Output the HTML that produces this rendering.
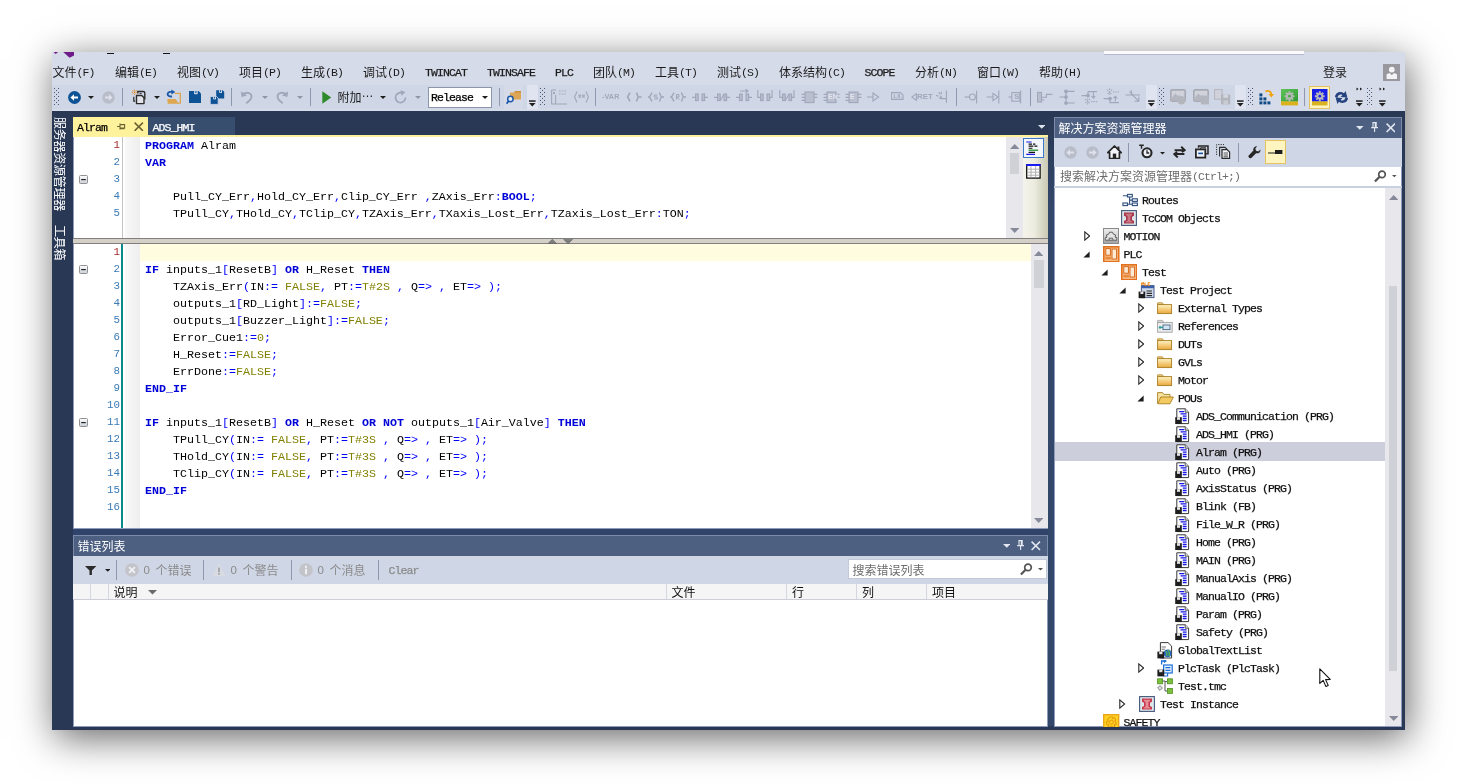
<!DOCTYPE html>
<html lang="zh-CN"><head><meta charset="utf-8"><title>TwinCAT</title>
<style>
html,body{margin:0;padding:0;background:#fff;}
body{width:1457px;height:782px;overflow:hidden;position:relative;font-family:"Liberation Mono","Noto Sans CJK SC",monospace;font-size:12px;}
#r div,#r svg{position:absolute;}
#r{position:absolute;left:0;top:0;width:1457px;height:782px;overflow:hidden;will-change:transform;}
.t{white-space:pre;font-size:12px;}
.l{-webkit-text-stroke:0.25px;letter-spacing:-0.9px;font-size:11.5px;position:relative;top:0.5px;font-family:"Liberation Mono",monospace;}
.mx .l{top:-0.2px;-webkit-text-stroke:0;}
.d{font-family:"Liberation Sans",sans-serif;letter-spacing:-0.4px;}
.c{font-family:"Liberation Sans","Noto Sans CJK SC",sans-serif;position:relative;top:1.05px;}
.e{position:relative;top:-4.6px;}
.code{white-space:pre;font-family:"Liberation Mono",monospace;font-size:11.667px;color:#000;}
.code b{color:#0000d8;font-weight:bold;}
.code i{color:#0000ff;font-style:normal;}
.code u{color:#808000;text-decoration:none;}
.ln{font-family:"Liberation Mono",monospace;font-size:10.8px;text-align:right;color:#2b91af;white-space:pre;}
</style></head><body><div id="r">
<div style="left:52px;top:52px;width:1353px;height:678px;background:#293955;box-shadow:3px 8px 36px 0 rgba(0,0,0,.60);"></div>
<div style="left:52px;top:52px;width:1353px;height:59px;background:#d6dbe9;"></div>
<div style="left:52px;top:85px;width:1194.5px;height:23.5px;background:#cfd6e5;"></div>
<svg style="left:52px;top:52px" width="23" height="7" viewBox="0 0 23 7"><path d="M1.6 0 L6.2 0 L3.6 1.9 Z M11.2 0 L22 0 L22 3.6 L17.6 5.7 Z" fill="#6f1c8a"/></svg>
<div style="left:106.8px;top:52.6px;width:7.3px;height:1.5px;background:#141414;"></div>
<div style="left:163px;top:52.6px;width:7.3px;height:1.5px;background:#141414;"></div>
<div style="left:1104px;top:51px;width:200px;height:2.6px;background:#fbfbfd;border-bottom:1px solid #b4bacb;"></div>
<div class="t mx" style="left:52.5px;top:63px;height:18px;line-height:18px;color:#1b1b1b;"><span class="c">文件</span><span class="l">(F)</span></div>
<div class="t mx" style="left:115px;top:63px;height:18px;line-height:18px;color:#1b1b1b;"><span class="c">编辑</span><span class="l">(E)</span></div>
<div class="t mx" style="left:177px;top:63px;height:18px;line-height:18px;color:#1b1b1b;"><span class="c">视图</span><span class="l">(V)</span></div>
<div class="t mx" style="left:239px;top:63px;height:18px;line-height:18px;color:#1b1b1b;"><span class="c">项目</span><span class="l">(P)</span></div>
<div class="t mx" style="left:301px;top:63px;height:18px;line-height:18px;color:#1b1b1b;"><span class="c">生成</span><span class="l">(B)</span></div>
<div class="t mx" style="left:363px;top:63px;height:18px;line-height:18px;color:#1b1b1b;"><span class="c">调试</span><span class="l">(D)</span></div>
<div class="t" style="left:425px;top:63px;height:18px;line-height:18px;color:#1b1b1b;"><span class="l">TWINCAT</span></div>
<div class="t" style="left:487px;top:63px;height:18px;line-height:18px;color:#1b1b1b;"><span class="l">TWINSAFE</span></div>
<div class="t" style="left:555px;top:63px;height:18px;line-height:18px;color:#1b1b1b;"><span class="l">PLC</span></div>
<div class="t mx" style="left:593px;top:63px;height:18px;line-height:18px;color:#1b1b1b;"><span class="c">团队</span><span class="l">(M)</span></div>
<div class="t mx" style="left:655px;top:63px;height:18px;line-height:18px;color:#1b1b1b;"><span class="c">工具</span><span class="l">(T)</span></div>
<div class="t mx" style="left:717px;top:63px;height:18px;line-height:18px;color:#1b1b1b;"><span class="c">测试</span><span class="l">(S)</span></div>
<div class="t mx" style="left:779px;top:63px;height:18px;line-height:18px;color:#1b1b1b;"><span class="c">体系结构</span><span class="l">(C)</span></div>
<div class="t" style="left:864.5px;top:63px;height:18px;line-height:18px;color:#1b1b1b;"><span class="l">SCOPE</span></div>
<div class="t mx" style="left:915px;top:63px;height:18px;line-height:18px;color:#1b1b1b;"><span class="c">分析</span><span class="l">(N)</span></div>
<div class="t mx" style="left:977px;top:63px;height:18px;line-height:18px;color:#1b1b1b;"><span class="c">窗口</span><span class="l">(W)</span></div>
<div class="t mx" style="left:1039px;top:63px;height:18px;line-height:18px;color:#1b1b1b;"><span class="c">帮助</span><span class="l">(H)</span></div>
<div class="t" style="left:1323px;top:63px;height:18px;line-height:18px;color:#1b1b1b;"><span class="c">登录</span></div>
<svg style="left:1382.5px;top:64px" width="17.5" height="17" viewBox="0 0 17.5 17"><rect width="17.5" height="17" fill="#98989e"/><circle cx="8.8" cy="5.6" r="2.9" fill="#f4f4f6"/><path d="M3.6 15 L3.6 10.2 L6.6 9 L8.8 11.2 L11 9 L14 10.2 L14 15 Z" fill="#f4f4f6"/></svg>
<svg style="left:54px;top:88px" width="5" height="17" viewBox="0 0 5 17"><rect x="0" y="0" width="1" height="1" fill="#4b5470"/><rect x="4" y="0" width="1" height="1" fill="#4b5470"/><rect x="2" y="2" width="1" height="1" fill="#4b5470"/><rect x="0" y="4" width="1" height="1" fill="#4b5470"/><rect x="4" y="4" width="1" height="1" fill="#4b5470"/><rect x="2" y="6" width="1" height="1" fill="#4b5470"/><rect x="0" y="8" width="1" height="1" fill="#4b5470"/><rect x="4" y="8" width="1" height="1" fill="#4b5470"/><rect x="2" y="10" width="1" height="1" fill="#4b5470"/><rect x="0" y="12" width="1" height="1" fill="#4b5470"/><rect x="4" y="12" width="1" height="1" fill="#4b5470"/><rect x="2" y="14" width="1" height="1" fill="#4b5470"/><rect x="0" y="16" width="1" height="1" fill="#4b5470"/><rect x="4" y="16" width="1" height="1" fill="#4b5470"/></svg>
<svg style="left:67.5px;top:90.5px" width="13" height="13" viewBox="0 0 13 13"><circle cx="6.5" cy="6.5" r="6.4" fill="#0e5296"/><path d="M10 5.6 L6 5.6 L6 3.2 L2.4 6.5 L6 9.8 L6 7.4 L10 7.4 Z" fill="#fff"/></svg>
<svg style="left:88px;top:96px" width="6" height="3.5" viewBox="0 0 6 3.5"><path d="M0 0 L6 0 L3 3 Z" fill="#1e1e1e"/></svg>
<svg style="left:102px;top:90.5px" width="13" height="13" viewBox="0 0 13 13"><circle cx="6.5" cy="6.5" r="6.2" fill="#b9bdc9"/><path d="M3 5.6 L7 5.6 L7 3.2 L10.6 6.5 L7 9.8 L7 7.4 L3 7.4 Z" fill="#dfe2ea"/></svg>
<div style="left:122px;top:88px;width:1.3px;height:18px;background:#8d97ad;"></div>
<svg style="left:131px;top:89px" width="16" height="16" viewBox="0 0 16 16"><path d="M6.8 4.6 L6.8 2.5 L12.2 2.5 Q13.8 2.5 13.8 4.1 L13.8 10.4" fill="none" stroke="#2b2b2b" stroke-width="1.4"/><path d="M8.6 4.4 L10.6 4.4" stroke="#2b2b2b" stroke-width="1"/><path d="M5.5 6.5 L10.8 6.5 L13 8.7 L13 14.6 L5.5 14.6 Z" fill="#e3e3ea" stroke="#2b2b2b" stroke-width="1.4" stroke-linejoin="round"/><path d="M2.8 7.8 L2.8 12.2 L4.2 12.2" fill="none" stroke="#2b2b2b" stroke-width="1.2"/><path d="M3.5 0.6 L3.5 6 M0.8 3.3 L6.2 3.3 M1.5 1.3 L5.5 5.3 M5.5 1.3 L1.5 5.3" stroke="#dd8a1c" stroke-width="0.95" stroke-dasharray="1.3 0.9"/></svg>
<svg style="left:154px;top:96px" width="6" height="3.5" viewBox="0 0 6 3.5"><path d="M0 0 L6 0 L3 3 Z" fill="#1e1e1e"/></svg>
<svg style="left:165.5px;top:89px" width="16" height="16" viewBox="0 0 16 16"><path d="M8.6 4.4 L14.3 4.4 L14.3 14.2 L11.4 14.2" fill="none" stroke="#dca450" stroke-width="1.3"/><path d="M1.3 10 L9.8 10 L12.6 14.7 L1.7 14.7 Z" fill="#dfa650"/><path d="M6 7.5 C0.4 8.2 0.4 2.6 4.8 2.9 L6 2.9" fill="none" stroke="#1b58a8" stroke-width="1.9"/><path d="M5.4 0.4 L9.3 2.9 L5.4 5.4 Z" fill="#1b58a8"/></svg>
<svg style="left:189px;top:90.8px" width="12.2" height="12.2" viewBox="0 0 12.2 12.2"><path d="M0 0 L9.6 0 L12.2 2.6 L12.2 12.2 L0 12.2 Z" fill="#0e5296"/><rect x="5.2" y="0" width="3.4" height="3.2" fill="#e4eaf4"/><rect x="6.3" y="0" width="1.2" height="2.2" fill="#0e5296"/></svg>
<svg style="left:210px;top:89.5px" width="15" height="15" viewBox="0 0 15 15"><path d="M6.2 0.2 L12.6 0.2 L14.2 1.8 L14.2 8.5 L6.2 8.5 Z" fill="#0e5296"/><rect x="9.2" y="0.2" width="2.8" height="2.6" fill="#e4eaf4"/><rect x="10.1" y="0.2" width="1" height="1.8" fill="#0e5296"/><path d="M0.2 6.5 L6.6 6.5 L8.2 8.1 L8.2 14.4 L0.2 14.4 Z" fill="#0e5296" stroke="#cfd6e5" stroke-width="0.9"/><rect x="3.2" y="6.9" width="2.8" height="2.4" fill="#e4eaf4"/><rect x="4.1" y="6.9" width="1" height="1.7" fill="#0e5296"/></svg>
<div style="left:231px;top:88px;width:1.3px;height:18px;background:#8d97ad;"></div>
<svg style="left:240px;top:90px" width="14" height="14" viewBox="0 0 14 14"><path d="M2.2 5.2 C5 1.2 12 2.2 11.4 7.2 C11 10 8.5 11.6 6.2 13.2" fill="none" stroke="#a0a7ba" stroke-width="1.9"/><path d="M0.8 1.2 L1.6 7 L7 5.6 Z" fill="#a0a7ba"/></svg>
<svg style="left:262px;top:96px" width="6" height="3.5" viewBox="0 0 6 3.5"><path d="M0 0 L6 0 L3 3 Z" fill="#8f96a8"/></svg>
<svg style="left:275px;top:90px" width="14" height="14" viewBox="0 0 14 14"><path d="M11.8 5.2 C9 1.2 2 2.2 2.6 7.2 C3 10 5.5 11.6 7.8 13.2" fill="none" stroke="#a0a7ba" stroke-width="1.9"/><path d="M13.2 1.2 L12.4 7 L7 5.6 Z" fill="#a0a7ba"/></svg>
<svg style="left:297px;top:96px" width="6" height="3.5" viewBox="0 0 6 3.5"><path d="M0 0 L6 0 L3 3 Z" fill="#8f96a8"/></svg>
<div style="left:309.5px;top:88px;width:1.3px;height:18px;background:#8d97ad;"></div>
<svg style="left:322px;top:90.5px" width="9.5" height="13" viewBox="0 0 9.5 13"><path d="M0.3 0.3 L9.2 6.5 L0.3 12.7 Z" fill="#2f8a2b"/></svg>
<div class="t" style="left:337.5px;top:88px;height:18px;line-height:18px;color:#1b1b1b;"><span class="c">附加<span class="e">…</span></span></div>
<svg style="left:380px;top:96px" width="6" height="3.5" viewBox="0 0 6 3.5"><path d="M0 0 L6 0 L3 3 Z" fill="#1e1e1e"/></svg>
<svg style="left:394px;top:90px" width="13" height="14" viewBox="0 0 13 14"><path d="M9.2 3.4 A5 5 0 1 0 11.5 7.6" fill="none" stroke="#a0a7ba" stroke-width="1.7"/><path d="M6.4 0.2 L11.4 2 L7.6 5.8 Z" fill="#a0a7ba"/></svg>
<svg style="left:414.5px;top:96px" width="6" height="3.5" viewBox="0 0 6 3.5"><path d="M0 0 L6 0 L3 3 Z" fill="#8f96a8"/></svg>
<div style="left:427.5px;top:86.5px;width:64.5px;height:21px;background:#fff;border:1px solid #8c96aa;box-sizing:border-box;"></div>
<div class="t" style="left:431px;top:88px;height:18px;line-height:18px;color:#000;"><span class="l">Release</span></div>
<svg style="left:482px;top:96px" width="6" height="3.5" viewBox="0 0 6 3.5"><path d="M0 0 L6 0 L3 3 Z" fill="#1e1e1e"/></svg>
<div style="left:498.5px;top:88px;width:1.3px;height:18px;background:#8d97ad;"></div>
<div style="left:503.5px;top:85px;width:19.5px;height:23.5px;background:#d4dae8;"></div>
<svg style="left:506px;top:89px" width="16" height="16" viewBox="0 0 16 16"><path d="M4 3.4 L8 3.4 L9 2 L15 2 L15 10.6 L4 10.6 Z" fill="#dca656"/><path d="M9 2 L15 2 L15 3.6 L8.4 3.6 Z" fill="#c98f3a"/><circle cx="4.4" cy="10" r="2.7" fill="#e9edf6" stroke="#1b58a8" stroke-width="1.5"/><path d="M2.6 12 L0.6 14.6" stroke="#1b58a8" stroke-width="1.8"/></svg>
<div style="left:527px;top:85px;width:10.5px;height:23.5px;background:#e0e4f0;"></div>
<svg style="left:529px;top:99.7px" width="7" height="7" viewBox="0 0 7 7"><rect x="0" y="0.3" width="6.6" height="1.5" fill="#1e1e1e"/><path d="M0 3 L6.6 3 L3.3 6.4 Z" fill="#1e1e1e"/></svg>
<svg style="left:540px;top:88px" width="5" height="17" viewBox="0 0 5 17"><rect x="0" y="0" width="1" height="1" fill="#4b5470"/><rect x="4" y="0" width="1" height="1" fill="#4b5470"/><rect x="2" y="2" width="1" height="1" fill="#4b5470"/><rect x="0" y="4" width="1" height="1" fill="#4b5470"/><rect x="4" y="4" width="1" height="1" fill="#4b5470"/><rect x="2" y="6" width="1" height="1" fill="#4b5470"/><rect x="0" y="8" width="1" height="1" fill="#4b5470"/><rect x="4" y="8" width="1" height="1" fill="#4b5470"/><rect x="2" y="10" width="1" height="1" fill="#4b5470"/><rect x="0" y="12" width="1" height="1" fill="#4b5470"/><rect x="4" y="12" width="1" height="1" fill="#4b5470"/><rect x="2" y="14" width="1" height="1" fill="#4b5470"/><rect x="0" y="16" width="1" height="1" fill="#4b5470"/><rect x="4" y="16" width="1" height="1" fill="#4b5470"/></svg>
<svg style="left:551px;top:89px" width="17" height="16" viewBox="0 0 17 16"><g fill="none" stroke="#a0a7ba" stroke-width="1.1"><path d="M0.6 1 L5 1 M0.6 1 L0.6 15 L16 15 M4.6 6 L4.6 15"/><path d="M8 2 L16 2 M8 5 L16 5" stroke-dasharray="1.5 1.2"/><rect x="2" y="3" width="2" height="2" fill="#a0a7ba" stroke="none"/></g></svg>
<svg style="left:574px;top:91px" width="15" height="12" viewBox="0 0 15 12"><g fill="none" stroke="#a0a7ba" stroke-width="1.1"><path d="M3 0.5 L0.6 6 L3 11.5 M12 0.5 L14.4 6 L12 11.5 M4.6 3.6 L6.8 6.6 M6.8 3.6 L4.6 6.6 M8.4 3.6 L10.6 6.6 M10.6 3.6 L8.4 6.6"/></g></svg>
<div style="left:595px;top:88px;width:1.3px;height:18px;background:#8d97ad;"></div>
<div class="t" style="left:602px;top:91px;height:12px;line-height:12px;color:#a0a7ba;font-size:7.2px;font-family:'Liberation Sans',sans-serif;font-weight:bold;letter-spacing:0.1px;">-VAR</div>
<svg style="left:626px;top:92px" width="16" height="10" viewBox="0 0 16 10"><g fill="none" stroke="#a0a7ba" stroke-width="1.1"><path d="M4 0.6 L1.6 5 L4 9.4 M10.4 0.6 L12.2 5 L10.4 9.4 M12.2 5 L15.6 5" stroke-width="1.6"/></g></svg>
<svg style="left:648px;top:92px" width="16" height="10" viewBox="0 0 16 10"><g fill="none" stroke="#a0a7ba" stroke-width="1.1"><path d="M4 0.6 L1.6 5 L4 9.4 M11.4 0.6 L13.2 5 L11.4 9.4 M13 5 L16 5 M0 5 L2 5" stroke-width="1.4"/><path d="M9.4 3 L6.2 3 L6.2 5 L9.4 5 L9.4 7 L6.2 7" stroke-width="1"/></g></svg>
<svg style="left:670px;top:92px" width="16" height="10" viewBox="0 0 16 10"><g fill="none" stroke="#a0a7ba" stroke-width="1.1"><path d="M4 0.6 L1.6 5 L4 9.4 M11.4 0.6 L13.2 5 L11.4 9.4 M13 5 L16 5 M0 5 L2 5" stroke-width="1.4"/><path d="M6.4 7.4 L6.4 2.6 L9 2.6 L9 5 L6.4 5 L9.4 7.4" stroke-width="1"/></g></svg>
<svg style="left:692px;top:89px" width="16" height="14" viewBox="0 0 16 14"><g fill="none" stroke="#a0a7ba" stroke-width="1.1"><rect x="3.6" y="5" width="2.6" height="6.6" fill="#b9bfce"/><rect x="10" y="5" width="2.6" height="6.6" fill="#b9bfce"/><path d="M0 8.4 L3.4 8.4 M12.8 8.4 L16 8.4"/></g></svg>
<svg style="left:714px;top:89px" width="16" height="14" viewBox="0 0 16 14"><g fill="none" stroke="#a0a7ba" stroke-width="1.1"><rect x="3.6" y="5" width="2.6" height="6.6" fill="#b9bfce"/><rect x="10" y="5" width="2.6" height="6.6" fill="#b9bfce"/><path d="M0 8.4 L3.4 8.4 M12.8 8.4 L16 8.4"/><path d="M6.4 11.4 L9.8 5.2"/></g></svg>
<svg style="left:736px;top:89px" width="16" height="14" viewBox="0 0 16 14"><g fill="none" stroke="#a0a7ba" stroke-width="1.1"><rect x="3.6" y="5" width="2.6" height="6.6" fill="#b9bfce"/><rect x="10" y="5" width="2.6" height="6.6" fill="#b9bfce"/><path d="M0 8.4 L3.4 8.4 M12.8 8.4 L16 8.4"/><path d="M4 2 L12 2 M9.6 0 L12 2 L9.6 4"/></g></svg>
<svg style="left:757px;top:89px" width="16" height="14" viewBox="0 0 16 14"><g fill="none" stroke="#a0a7ba" stroke-width="1.1"><rect x="3.6" y="5" width="2.6" height="6.6" fill="#b9bfce"/><rect x="10" y="5" width="2.6" height="6.6" fill="#b9bfce"/><path d="M0.8 1 L0.8 8.4 L3.4 8.4 M12.8 8.4 L15 8.4 L15 1"/></g></svg>
<svg style="left:779px;top:89px" width="16" height="14" viewBox="0 0 16 14"><g fill="none" stroke="#a0a7ba" stroke-width="1.1"><rect x="3.6" y="5" width="2.6" height="6.6" fill="#b9bfce"/><rect x="10" y="5" width="2.6" height="6.6" fill="#b9bfce"/><path d="M0.8 1 L0.8 8.4 L3.4 8.4 M12.8 8.4 L15 8.4 L15 1"/><path d="M6.4 11.4 L9.8 5.2"/></g></svg>
<svg style="left:801px;top:91px" width="17" height="13" viewBox="0 0 17 13"><g fill="none" stroke="#a0a7ba" stroke-width="1.1"><rect x="4" y="1" width="9" height="10.6" fill="#b9bfce" stroke="#a0a7ba"/><path d="M0.6 3.4 L4 3.4 M0.6 6.4 L4 6.4 M0.6 9.4 L4 9.4 M13 3.4 L16.4 3.4 M13 6.4 L16.4 6.4"/></g></svg>
<svg style="left:823px;top:91px" width="17" height="13" viewBox="0 0 17 13"><g fill="none" stroke="#a0a7ba" stroke-width="1.1"><rect x="4" y="1" width="9" height="10.6" fill="#b9bfce" stroke="#a0a7ba"/><path d="M0.6 3.4 L4 3.4 M0.6 6.4 L4 6.4 M0.6 9.4 L4 9.4 M13 3.4 L16.4 3.4 M13 6.4 L16.4 6.4"/></g></svg>
<div class="t" style="left:828px;top:92px;height:10px;line-height:10px;color:#e3e6ef;font-size:7px;font-family:'Liberation Sans',sans-serif;font-weight:bold;">EN</div>
<svg style="left:845px;top:91px" width="17" height="13" viewBox="0 0 17 13"><g fill="none" stroke="#a0a7ba" stroke-width="1.1"><rect x="4" y="1" width="9" height="10.6" fill="#b9bfce" stroke="#a0a7ba"/><path d="M0.6 3.4 L4 3.4 M0.6 6.4 L4 6.4 M0.6 9.4 L4 9.4 M13 3.4 L16.4 3.4 M13 6.4 L16.4 6.4"/></g></svg>
<div class="t" style="left:850px;top:92px;height:10px;line-height:10px;color:#e3e6ef;font-size:7px;font-family:'Liberation Sans',sans-serif;font-weight:bold;">E</div>
<svg style="left:867px;top:92px" width="13" height="10" viewBox="0 0 13 10"><g fill="none" stroke="#a0a7ba" stroke-width="1.1"><path d="M0 5 L6 5 M6 1 L11.6 5 L6 9 Z"/></g></svg>
<svg style="left:891px;top:92px" width="13" height="9" viewBox="0 0 13 9"><g fill="none" stroke="#a0a7ba" stroke-width="1.1"><path d="M0.6 0.6 L9.4 0.6 L12 3 L12 7.4 L0.6 7.4 Z"/></g></svg>
<div class="t" style="left:893.5px;top:93px;height:7px;line-height:7px;color:#a0a7ba;font-size:6px;font-family:'Liberation Sans',sans-serif;font-weight:bold;">LII.</div>
<svg style="left:911px;top:93px" width="6" height="8" viewBox="0 0 6 8"><g fill="none" stroke="#a0a7ba" stroke-width="1.1"><path d="M5.4 0.6 L0.8 4 L5.4 7.4 Z"/></g></svg>
<div class="t" style="left:917px;top:92px;height:10px;line-height:10px;color:#a0a7ba;font-size:8px;font-family:'Liberation Sans',sans-serif;font-weight:bold;">RET</div>
<svg style="left:935px;top:90px" width="13" height="14" viewBox="0 0 13 14"><g fill="none" stroke="#a0a7ba" stroke-width="1.1"><path d="M11.4 0.6 L11.4 13 M5.6 8.6 L11.4 8.6 M3.6 2.4 L5.4 4.4 M1 5.4 L3.6 6.2 M6 1.6 L6.6 3.8 M4.4 9 L6 6.4 L7.4 9"/></g></svg>
<div style="left:955.5px;top:88px;width:1.3px;height:18px;background:#8d97ad;"></div>
<svg style="left:964px;top:90px" width="14" height="14" viewBox="0 0 14 14"><g fill="none" stroke="#a0a7ba" stroke-width="1.1"><path d="M0.6 7 L5.4 7"/><circle cx="8.4" cy="7" r="3"/><path d="M12.6 0.6 L12.6 13.4"/></g></svg>
<svg style="left:986px;top:90px" width="14" height="14" viewBox="0 0 14 14"><g fill="none" stroke="#a0a7ba" stroke-width="1.1"><path d="M0.6 7 L7 7 M7 3.4 L12 7 L7 10.6 Z M12.8 0.6 L12.8 13.4"/></g></svg>
<svg style="left:1008px;top:90px" width="14" height="14" viewBox="0 0 14 14"><g fill="none" stroke="#a0a7ba" stroke-width="1.1"><path d="M0.6 7 L3.6 7"/><rect x="3.8" y="2.6" width="8" height="8.6"/><path d="M12.6 0.6 L12.6 13.4"/></g></svg>
<div class="t" style="left:1014px;top:92px;height:10px;line-height:10px;color:#a0a7ba;font-size:8px;font-family:'Liberation Sans',sans-serif;font-weight:bold;">S</div>
<div style="left:1029.5px;top:88px;width:1.3px;height:18px;background:#8d97ad;"></div>
<svg style="left:1037px;top:90px" width="16" height="14" viewBox="0 0 16 14"><g fill="none" stroke="#a0a7ba" stroke-width="1.1"><rect x="0.5" y="2.4" width="4" height="9.6" fill="#b9bfce"/><path d="M4.6 7.2 L9.4 7.2 L9.4 4.4 L15.4 4.4 M4.6 10 L7.4 10"/></g></svg>
<svg style="left:1059px;top:89px" width="16" height="16" viewBox="0 0 16 16"><g fill="none" stroke="#a0a7ba" stroke-width="1.1"><path d="M0.6 8 L7 8 M7 2.4 L7 14 M7 2.4 L15.6 2.4 M7 14 L15.6 14"/><circle cx="7" cy="2.4" r="1.3" fill="#a0a7ba"/><circle cx="7" cy="8" r="1.3" fill="#a0a7ba"/><circle cx="7" cy="14" r="1.3" fill="#a0a7ba"/></g></svg>
<svg style="left:1081px;top:89px" width="17" height="16" viewBox="0 0 17 16"><g fill="none" stroke="#a0a7ba" stroke-width="1.1"><path d="M0.6 6.6 L7 6.6 M7 2.6 L16 2.6 M7 2.6 L7 6.6 M12.4 3.6 L12.4 9 M10.4 7 L12.4 9.2 L14.4 7"/><circle cx="7" cy="6.6" r="1.3" fill="#a0a7ba"/><path d="M4 10 L9 14.6 M9 10 L4 14.6 M6.6 9.4 L6.6 15.4 M10 12.6 L16 12.6" stroke-dasharray="1.4 1"/></g></svg>
<svg style="left:1103px;top:88px" width="17" height="17" viewBox="0 0 17 17"><g fill="none" stroke="#a0a7ba" stroke-width="1.1"><path d="M0.6 10.6 L7 10.6 M7 10.6 L7 14.6 L16 14.6 M12.4 13.6 L12.4 8.4 M10.4 10.4 L12.4 8.2 L14.4 10.4"/><circle cx="7" cy="10.6" r="1.3" fill="#a0a7ba"/><path d="M4 1.6 L9 6.6 M9 1.6 L4 6.6 M6.6 0.6 L6.6 7.4 M10 4 L16 4" stroke-dasharray="1.4 1"/></g></svg>
<svg style="left:1125px;top:90px" width="16" height="14" viewBox="0 0 16 14"><g fill="none" stroke="#a0a7ba" stroke-width="1.1"><path d="M0.6 5 L15 5 M4.6 1.6 L8 5 M6.4 0.6 L6.4 4 M6 3.6 L13.6 11 M13.8 6.6 L13.8 11.2 L9.4 11.2"/></g></svg>
<div style="left:1146px;top:85px;width:10.5px;height:23.5px;background:#e0e4f0;"></div>
<svg style="left:1148px;top:99.7px" width="7" height="7" viewBox="0 0 7 7"><rect x="0" y="0.3" width="6.6" height="1.5" fill="#1e1e1e"/><path d="M0 3 L6.6 3 L3.3 6.4 Z" fill="#1e1e1e"/></svg>
<svg style="left:1159px;top:88px" width="5" height="17" viewBox="0 0 5 17"><rect x="0" y="0" width="1" height="1" fill="#4b5470"/><rect x="4" y="0" width="1" height="1" fill="#4b5470"/><rect x="2" y="2" width="1" height="1" fill="#4b5470"/><rect x="0" y="4" width="1" height="1" fill="#4b5470"/><rect x="4" y="4" width="1" height="1" fill="#4b5470"/><rect x="2" y="6" width="1" height="1" fill="#4b5470"/><rect x="0" y="8" width="1" height="1" fill="#4b5470"/><rect x="4" y="8" width="1" height="1" fill="#4b5470"/><rect x="2" y="10" width="1" height="1" fill="#4b5470"/><rect x="0" y="12" width="1" height="1" fill="#4b5470"/><rect x="4" y="12" width="1" height="1" fill="#4b5470"/><rect x="2" y="14" width="1" height="1" fill="#4b5470"/><rect x="0" y="16" width="1" height="1" fill="#4b5470"/><rect x="4" y="16" width="1" height="1" fill="#4b5470"/></svg>
<svg style="left:1170px;top:89px" width="17" height="16" viewBox="0 0 17 16"><rect x="0.8" y="0.8" width="14.4" height="11.4" rx="1.5" fill="#d0d3dc" stroke="#a9abb4" stroke-width="1.7"/><path d="M2 8.4 L5.2 4.4 L8 7 L9.6 5.8 L9.6 11 L2 11 Z" fill="#b4b7c0" stroke="none"/><circle cx="11.4" cy="11.2" r="4.2" fill="#b4b6be" stroke="none"/></svg>
<svg style="left:1192.5px;top:89px" width="17" height="16" viewBox="0 0 17 16"><rect x="0.8" y="0.8" width="14.4" height="11.4" rx="1.5" fill="#d0d3dc" stroke="#a9abb4" stroke-width="1.7"/><path d="M2 8.4 L5.2 4.4 L8 7 L9.6 5.8 L9.6 11 L2 11 Z" fill="#b4b7c0" stroke="none"/><rect x="8" y="6.6" width="8" height="8.8" fill="#b4b6be" stroke="none"/></svg>
<svg style="left:1214px;top:89px" width="17" height="16" viewBox="0 0 17 16"><rect x="0.6" y="0.6" width="7.6" height="9.6" fill="#cfd2da" stroke="#b4b6be"/><rect x="7" y="5.6" width="9.2" height="9.8" fill="#b4b6be"/><rect x="9.4" y="5.6" width="4.6" height="3.2" fill="#d3d6de"/><rect x="9.4" y="11.4" width="4.6" height="4" fill="#c9ccd4"/></svg>
<div style="left:1235px;top:85px;width:10.5px;height:23.5px;background:#e0e4f0;"></div>
<svg style="left:1237px;top:99.7px" width="7" height="7" viewBox="0 0 7 7"><rect x="0" y="0.3" width="6.6" height="1.5" fill="#1e1e1e"/><path d="M0 3 L6.6 3 L3.3 6.4 Z" fill="#1e1e1e"/></svg>
<svg style="left:1248px;top:88px" width="5" height="17" viewBox="0 0 5 17"><rect x="0" y="0" width="1" height="1" fill="#4b5470"/><rect x="4" y="0" width="1" height="1" fill="#4b5470"/><rect x="2" y="2" width="1" height="1" fill="#4b5470"/><rect x="0" y="4" width="1" height="1" fill="#4b5470"/><rect x="4" y="4" width="1" height="1" fill="#4b5470"/><rect x="2" y="6" width="1" height="1" fill="#4b5470"/><rect x="0" y="8" width="1" height="1" fill="#4b5470"/><rect x="4" y="8" width="1" height="1" fill="#4b5470"/><rect x="2" y="10" width="1" height="1" fill="#4b5470"/><rect x="0" y="12" width="1" height="1" fill="#4b5470"/><rect x="4" y="12" width="1" height="1" fill="#4b5470"/><rect x="2" y="14" width="1" height="1" fill="#4b5470"/><rect x="0" y="16" width="1" height="1" fill="#4b5470"/><rect x="4" y="16" width="1" height="1" fill="#4b5470"/></svg>
<svg style="left:1259px;top:88.5px" width="16" height="16" viewBox="0 0 16 16"><rect x="0.4" y="4.4" width="3" height="3" fill="#0f4a85"/><rect x="0.4" y="8.4" width="3" height="3" fill="#0f4a85"/><rect x="0.4" y="12.4" width="3" height="3" fill="#0f4a85"/><rect x="4.4" y="8.4" width="3" height="3" fill="#0f4a85"/><rect x="4.4" y="12.4" width="3" height="3" fill="#0f4a85"/><rect x="8.4" y="12.4" width="3" height="3" fill="#0f4a85"/><path d="M6.4 2.4 C9.4 0.8 12.4 2.6 12.4 6" fill="none" stroke="#f0a30a" stroke-width="1.7"/><path d="M9.6 5 L15 5 L12.4 8.6 Z" fill="#f0a30a"/></svg>
<svg style="left:1281px;top:89px" width="17" height="16.5" viewBox="0 0 17 16.5"><defs><linearGradient id="gg" x1="0" y1="0" x2="1" y2="1"><stop offset="0" stop-color="#5fc45a"/><stop offset="1" stop-color="#2f9a32"/></linearGradient></defs><rect width="17" height="12.6" fill="url(#gg)"/><rect y="12.4" width="17" height="4" fill="#d9b21c"/><g transform="translate(8.5,7.2) scale(1.12)"><circle r="2.9" fill="#b8b8b8"/><path d="M-0.9 -4.4 H0.9 V4.4 H-0.9 Z M-4.4 -0.9 H4.4 V0.9 H-4.4 Z M-3.7 -2.5 L-2.5 -3.7 L3.7 2.5 L2.5 3.7 Z M2.5 -3.7 L3.7 -2.5 L-2.5 3.7 L-3.7 2.5 Z" fill="#b8b8b8"/><circle r="1.2" fill="#3fa73f"/></g></svg>
<div style="left:1303.5px;top:88px;width:1.3px;height:18px;background:#8d97ad;"></div>
<div style="left:1308.5px;top:86px;width:21.5px;height:23px;background:#fdf4bf;border:1px solid #e5c365;box-sizing:border-box;"></div>
<svg style="left:1312px;top:89px" width="15.5" height="16.5" viewBox="0 0 15.5 16.5"><rect width="15.5" height="12.6" fill="#1a1fe8"/><rect y="12.4" width="15.5" height="4" fill="#d9b21c"/><g transform="translate(7.8,7.2) scale(1.12)"><circle r="2.9" fill="#b8b8b8"/><path d="M-0.9 -4.4 H0.9 V4.4 H-0.9 Z M-4.4 -0.9 H4.4 V0.9 H-4.4 Z M-3.7 -2.5 L-2.5 -3.7 L3.7 2.5 L2.5 3.7 Z M2.5 -3.7 L3.7 -2.5 L-2.5 3.7 L-3.7 2.5 Z" fill="#b8b8b8"/><circle r="1.2" fill="#1a1fe8"/></g></svg>
<svg style="left:1333.5px;top:88.5px" width="15" height="17" viewBox="0 0 15 17"><path d="M1 8 C1.2 3.6 6.6 1.6 10 4.2 L11.6 2 L13.4 8.6 L6.6 8 L8.4 6 C6.4 4.8 4 5.8 3.6 8.4 Z M14 9 C13.8 13.4 8.4 15.4 5 12.8 L3.4 15 L1.6 8.4 L8.4 9 L6.6 11 C8.6 12.2 11 11.2 11.4 8.6 Z" fill="#24437f"/></svg>
<svg style="left:1355.5px;top:87px" width="7" height="5" viewBox="0 0 7 5"><path d="M0.5 0.5 L2.6 2 L0.5 3.6 Z M4 0.5 L6.1 2 L4 3.6 Z" fill="#1e1e1e"/></svg>
<svg style="left:1355.5px;top:99.7px" width="7" height="7" viewBox="0 0 7 7"><rect x="0" y="0.3" width="6.6" height="1.5" fill="#1e1e1e"/><path d="M0 3 L6.6 3 L3.3 6.4 Z" fill="#1e1e1e"/></svg>
<svg style="left:1367px;top:88px" width="5" height="17" viewBox="0 0 5 17"><rect x="0" y="0" width="1" height="1" fill="#4b5470"/><rect x="4" y="0" width="1" height="1" fill="#4b5470"/><rect x="2" y="2" width="1" height="1" fill="#4b5470"/><rect x="0" y="4" width="1" height="1" fill="#4b5470"/><rect x="4" y="4" width="1" height="1" fill="#4b5470"/><rect x="2" y="6" width="1" height="1" fill="#4b5470"/><rect x="0" y="8" width="1" height="1" fill="#4b5470"/><rect x="4" y="8" width="1" height="1" fill="#4b5470"/><rect x="2" y="10" width="1" height="1" fill="#4b5470"/><rect x="0" y="12" width="1" height="1" fill="#4b5470"/><rect x="4" y="12" width="1" height="1" fill="#4b5470"/><rect x="2" y="14" width="1" height="1" fill="#4b5470"/><rect x="0" y="16" width="1" height="1" fill="#4b5470"/><rect x="4" y="16" width="1" height="1" fill="#4b5470"/></svg>
<svg style="left:1379px;top:87px" width="7" height="5" viewBox="0 0 7 5"><path d="M0.5 0.5 L2.6 2 L0.5 3.6 Z M4 0.5 L6.1 2 L4 3.6 Z" fill="#1e1e1e"/></svg>
<svg style="left:1379px;top:99.7px" width="7" height="7" viewBox="0 0 7 7"><rect x="0" y="0.3" width="6.6" height="1.5" fill="#1e1e1e"/><path d="M0 3 L6.6 3 L3.3 6.4 Z" fill="#1e1e1e"/></svg>
<div class="t c" style="left:52px;top:117.3px;width:13px;writing-mode:vertical-rl;text-orientation:sideways;color:#fff;line-height:13px;letter-spacing:-0.25px;font-family:'Liberation Sans','Noto Sans CJK SC',sans-serif;">服务器资源管理器</div>
<div class="t c" style="left:52px;top:225.3px;width:13px;writing-mode:vertical-rl;text-orientation:sideways;color:#fff;line-height:13px;letter-spacing:-0.25px;font-family:'Liberation Sans','Noto Sans CJK SC',sans-serif;">工具箱</div>
<div style="left:73px;top:117px;width:75px;height:18.5px;background:#fff29d;"></div>
<div class="t" style="left:77px;top:118.5px;height:17px;line-height:17px;color:#000;"><span class="l">Alram</span></div>
<svg style="left:117px;top:121.5px" width="9" height="9" viewBox="0 0 9 9"><path d="M0 4.5 L3 4.5 M3 1.6 L3 7.4 M3 2.6 L7.6 2.6 L7.6 6 L3 6 M3 6.6 L7.6 6.6" fill="none" stroke="#6b6332" stroke-width="1.1"/></svg>
<svg style="left:134px;top:121.5px" width="9.5" height="9.5" viewBox="0 0 9.5 9.5"><path d="M0.6 0.6 L8.9 8.9 M8.9 0.6 L0.6 8.9" stroke="#6b6332" stroke-width="1.5"/></svg>
<div style="left:148px;top:117px;width:87px;height:18.5px;background:#374e6f;"></div>
<div class="t" style="left:152.5px;top:118.5px;height:17px;line-height:17px;color:#fff;"><span class="l">ADS_HMI</span></div>
<div style="left:73px;top:135px;width:974.5px;height:2.3px;background:#fff29d;"></div>
<svg style="left:1037.5px;top:125px" width="7.5" height="4.25" viewBox="0 0 7.5 4.25"><path d="M0 0 L7.5 0 L3.75 3.75 Z" fill="#dfe3ee"/></svg>
<div style="left:73px;top:137px;width:974.8px;height:101px;background:#fff;"></div>
<div style="left:73px;top:244px;width:974.8px;height:284px;background:#fff;"></div>
<div style="left:73px;top:137px;width:1px;height:391.8px;background:#8e9bbc;"></div>
<div style="left:1046.8px;top:137px;width:1px;height:391.8px;background:#8e9bbc;"></div>
<div style="left:73px;top:528px;width:974.8px;height:0.9px;background:#8e9bbc;"></div>
<div style="left:125px;top:137px;width:15px;height:101px;background:linear-gradient(90deg,#f8f8f8,#eeeeee);"></div>
<div style="left:125px;top:244px;width:15px;height:284px;background:linear-gradient(90deg,#f8f8f8,#eeeeee);"></div>
<div style="left:122px;top:137px;width:1.2px;height:101px;background:#c4c4c4;"></div>
<div style="left:121px;top:244px;width:2.1px;height:284px;background:#0a8a86;"></div>
<div style="left:140px;top:244px;width:890.5px;height:16.6px;background:#fffce0;"></div>
<div style="left:73px;top:238px;width:974.8px;height:6px;background:#d4d0c8;border-top:1px solid #808080;border-bottom:1px solid #808080;box-sizing:border-box;"></div>
<svg style="left:548px;top:238.6px" width="26" height="5" viewBox="0 0 26 5"><path d="M0 4.6 L4.3 0.2 L8.6 4.6 Z M15.6 0.4 L24.6 0.4 L20.1 4.8 Z" fill="#7d7d7d" stroke="#5a5a5a" stroke-width="0.5"/></svg>
<div class="ln" style="left:90px;top:137.8px;margin-top:-0.5px;width:30px;height:17px;line-height:17px;color:#a82a2a">1</div>
<div class="code" style="left:145px;top:137.8px;height:17px;line-height:17px;"><b>PROGRAM</b> Alram</div>
<div class="ln" style="left:90px;top:154.8px;margin-top:-0.5px;width:30px;height:17px;line-height:17px;color:#3a7ab6">2</div>
<div class="code" style="left:145px;top:154.8px;height:17px;line-height:17px;"><b>VAR</b></div>
<div class="ln" style="left:90px;top:171.8px;margin-top:-0.5px;width:30px;height:17px;line-height:17px;color:#3a7ab6">3</div>
<div class="ln" style="left:90px;top:188.8px;margin-top:-0.5px;width:30px;height:17px;line-height:17px;color:#3a7ab6">4</div>
<div class="code" style="left:145px;top:188.8px;height:17px;line-height:17px;">    Pull_CY_Err<i>,</i>Hold_CY_Err<i>,</i>Clip_CY_Err <i>,</i>ZAxis_Err<i>:</i><b>BOOL</b><i>;</i></div>
<div class="ln" style="left:90px;top:205.8px;margin-top:-0.5px;width:30px;height:17px;line-height:17px;color:#3a7ab6">5</div>
<div class="code" style="left:145px;top:205.8px;height:17px;line-height:17px;">    TPull_CY<i>,</i>THold_CY<i>,</i>TClip_CY<i>,</i>TZAxis_Err<i>,</i>TXaxis_Lost_Err<i>,</i>TZaxis_Lost_Err<i>:</i>TON<i>;</i></div>
<div class="ln" style="left:90px;top:244.5px;margin-top:-0.5px;width:30px;height:17px;line-height:17px;color:#a82a2a">1</div>
<div class="ln" style="left:90px;top:261.5px;margin-top:-0.5px;width:30px;height:17px;line-height:17px;color:#3a7ab6">2</div>
<div class="code" style="left:145px;top:261.5px;height:17px;line-height:17px;"><b>IF</b> inputs_1<i>[</i>ResetB<i>]</i> <b>OR</b> H_Reset <b>THEN</b></div>
<div class="ln" style="left:90px;top:278.5px;margin-top:-0.5px;width:30px;height:17px;line-height:17px;color:#3a7ab6">3</div>
<div class="code" style="left:145px;top:278.5px;height:17px;line-height:17px;">    TZAxis_Err<i>(</i>IN<i>:</i><i>=</i> <u>FALSE</u><i>,</i> PT<i>:</i><i>=</i><u>T#2S</u> <i>,</i> Q<i>=</i><i>&gt;</i> <i>,</i> ET<i>=</i><i>&gt;</i> <i>)</i><i>;</i></div>
<div class="ln" style="left:90px;top:295.5px;margin-top:-0.5px;width:30px;height:17px;line-height:17px;color:#3a7ab6">4</div>
<div class="code" style="left:145px;top:295.5px;height:17px;line-height:17px;">    outputs_1<i>[</i>RD_Light<i>]</i><i>:</i><i>=</i><u>FALSE</u><i>;</i></div>
<div class="ln" style="left:90px;top:312.5px;margin-top:-0.5px;width:30px;height:17px;line-height:17px;color:#3a7ab6">5</div>
<div class="code" style="left:145px;top:312.5px;height:17px;line-height:17px;">    outputs_1<i>[</i>Buzzer_Light<i>]</i><i>:</i><i>=</i><u>FALSE</u><i>;</i></div>
<div class="ln" style="left:90px;top:329.5px;margin-top:-0.5px;width:30px;height:17px;line-height:17px;color:#3a7ab6">6</div>
<div class="code" style="left:145px;top:329.5px;height:17px;line-height:17px;">    Error_Cue1<i>:</i><i>=</i><u>0</u><i>;</i></div>
<div class="ln" style="left:90px;top:346.5px;margin-top:-0.5px;width:30px;height:17px;line-height:17px;color:#3a7ab6">7</div>
<div class="code" style="left:145px;top:346.5px;height:17px;line-height:17px;">    H_Reset<i>:</i><i>=</i><u>FALSE</u><i>;</i></div>
<div class="ln" style="left:90px;top:363.5px;margin-top:-0.5px;width:30px;height:17px;line-height:17px;color:#3a7ab6">8</div>
<div class="code" style="left:145px;top:363.5px;height:17px;line-height:17px;">    ErrDone<i>:</i><i>=</i><u>FALSE</u><i>;</i></div>
<div class="ln" style="left:90px;top:380.5px;margin-top:-0.5px;width:30px;height:17px;line-height:17px;color:#3a7ab6">9</div>
<div class="code" style="left:145px;top:380.5px;height:17px;line-height:17px;"><b>END_IF</b></div>
<div class="ln" style="left:90px;top:397.5px;margin-top:-0.5px;width:30px;height:17px;line-height:17px;color:#3a7ab6">10</div>
<div class="ln" style="left:90px;top:414.5px;margin-top:-0.5px;width:30px;height:17px;line-height:17px;color:#3a7ab6">11</div>
<div class="code" style="left:145px;top:414.5px;height:17px;line-height:17px;"><b>IF</b> inputs_1<i>[</i>ResetB<i>]</i> <b>OR</b> H_Reset <b>OR</b> <b>NOT</b> outputs_1<i>[</i>Air_Valve<i>]</i> <b>THEN</b></div>
<div class="ln" style="left:90px;top:431.5px;margin-top:-0.5px;width:30px;height:17px;line-height:17px;color:#3a7ab6">12</div>
<div class="code" style="left:145px;top:431.5px;height:17px;line-height:17px;">    TPull_CY<i>(</i>IN<i>:</i><i>=</i> <u>FALSE</u><i>,</i> PT<i>:</i><i>=</i><u>T#3S</u> <i>,</i> Q<i>=</i><i>&gt;</i> <i>,</i> ET<i>=</i><i>&gt;</i> <i>)</i><i>;</i></div>
<div class="ln" style="left:90px;top:448.5px;margin-top:-0.5px;width:30px;height:17px;line-height:17px;color:#3a7ab6">13</div>
<div class="code" style="left:145px;top:448.5px;height:17px;line-height:17px;">    THold_CY<i>(</i>IN<i>:</i><i>=</i> <u>FALSE</u><i>,</i> PT<i>:</i><i>=</i><u>T#3S</u> <i>,</i> Q<i>=</i><i>&gt;</i> <i>,</i> ET<i>=</i><i>&gt;</i> <i>)</i><i>;</i></div>
<div class="ln" style="left:90px;top:465.5px;margin-top:-0.5px;width:30px;height:17px;line-height:17px;color:#3a7ab6">14</div>
<div class="code" style="left:145px;top:465.5px;height:17px;line-height:17px;">    TClip_CY<i>(</i>IN<i>:</i><i>=</i> <u>FALSE</u><i>,</i> PT<i>:</i><i>=</i><u>T#3S</u> <i>,</i> Q<i>=</i><i>&gt;</i> <i>,</i> ET<i>=</i><i>&gt;</i> <i>)</i><i>;</i></div>
<div class="ln" style="left:90px;top:482.5px;margin-top:-0.5px;width:30px;height:17px;line-height:17px;color:#3a7ab6">15</div>
<div class="code" style="left:145px;top:482.5px;height:17px;line-height:17px;"><b>END_IF</b></div>
<div class="ln" style="left:90px;top:499.5px;margin-top:-0.5px;width:30px;height:17px;line-height:17px;color:#3a7ab6">16</div>
<svg style="left:79px;top:174.8px" width="9" height="9" viewBox="0 0 9 9"><defs><linearGradient id="fg174" x1="0" y1="0" x2="0" y2="1"><stop offset="0" stop-color="#ffffff"/><stop offset="1" stop-color="#c9cfd8"/></linearGradient></defs><rect x="0.5" y="0.5" width="8" height="8" rx="1" fill="url(#fg174)" stroke="#919191"/><rect x="2.2" y="4" width="4.6" height="1.2" fill="#222"/></svg>
<svg style="left:79px;top:265.2px" width="9" height="9" viewBox="0 0 9 9"><defs><linearGradient id="fg265" x1="0" y1="0" x2="0" y2="1"><stop offset="0" stop-color="#ffffff"/><stop offset="1" stop-color="#c9cfd8"/></linearGradient></defs><rect x="0.5" y="0.5" width="8" height="8" rx="1" fill="url(#fg265)" stroke="#919191"/><rect x="2.2" y="4" width="4.6" height="1.2" fill="#222"/></svg>
<svg style="left:79px;top:418.2px" width="9" height="9" viewBox="0 0 9 9"><defs><linearGradient id="fg418" x1="0" y1="0" x2="0" y2="1"><stop offset="0" stop-color="#ffffff"/><stop offset="1" stop-color="#c9cfd8"/></linearGradient></defs><rect x="0.5" y="0.5" width="8" height="8" rx="1" fill="url(#fg418)" stroke="#919191"/><rect x="2.2" y="4" width="4.6" height="1.2" fill="#222"/></svg>
<div style="left:1006.2px;top:137px;width:16.6px;height:101px;background:#e8e8ec;"></div>
<svg style="left:1009.8px;top:143.5px" width="9.4" height="5" viewBox="0 0 9.4 5"><path d="M0 5 L4.7 0 L9.4 5 Z" fill="#868999"/></svg>
<svg style="left:1009.8px;top:227.5px" width="9.4" height="5" viewBox="0 0 9.4 5"><path d="M0 0 L9.4 0 L4.7 5 Z" fill="#868999"/></svg>
<div style="left:1009.9px;top:153px;width:9.2px;height:21px;background:#d0d1d7;"></div>
<div style="left:1030.5px;top:244px;width:17px;height:284px;background:#e8e8ec;"></div>
<svg style="left:1034.1px;top:250.5px" width="9.4" height="5" viewBox="0 0 9.4 5"><path d="M0 5 L4.7 0 L9.4 5 Z" fill="#868999"/></svg>
<svg style="left:1034.1px;top:517.5px" width="9.4" height="5" viewBox="0 0 9.4 5"><path d="M0 0 L9.4 0 L4.7 5 Z" fill="#868999"/></svg>
<div style="left:1034.2px;top:260px;width:9.6px;height:28px;background:#d0d1d7;"></div>
<div style="left:1023px;top:137px;width:24.5px;height:101px;background:linear-gradient(90deg,#f4f4ec 0%,#ecece0 45%,#c9c9b4 100%);"></div>
<div style="left:1023px;top:138px;width:20.8px;height:19.5px;background:#f3f6fb;border:1px solid #3a78c8;box-sizing:border-box;"></div>
<svg style="left:1026px;top:141px" width="15" height="15" viewBox="0 0 15 15"><path d="M0.3 1 L5.6 1 M0.3 13.4 L9 13.4" stroke="#1717e6" stroke-width="1.2"/><path d="M2.6 3.1 L6 3.1 M7 3.1 L9.4 3.1 M2.6 5.1 L7.4 5.1 M8.4 5.1 L11.4 5.1 M2.6 7.2 L6.4 7.2 M2.6 11.3 L9 11.3" stroke="#111" stroke-width="1.15"/><path d="M2.6 9.2 L12.2 9.2" stroke="#0f8a1a" stroke-width="1.2"/></svg>
<svg style="left:1025.8px;top:164px" width="15" height="15" viewBox="0 0 15 15"><rect x="0.7" y="0.7" width="13.4" height="13.4" fill="#fff" stroke="#111" stroke-width="1.3"/><rect x="0.2" y="0.1" width="14.4" height="1.9" fill="#1a1aff"/><path d="M1.2 5.2 L13.6 5.2 M1.2 8.2 L13.6 8.2 M1.2 11.2 L13.6 11.2 M5 2.2 L5 13.6 M9.6 2.2 L9.6 13.6" stroke="#a8a8a8" stroke-width="0.9"/></svg>
<div style="left:73px;top:529px;width:974.8px;height:6.2px;background:#30436a;"></div>
<div style="left:73.2px;top:535px;width:974.6px;height:191.5px;background:#fff;border:1px solid #8e9bbc;border-top:none;box-sizing:border-box;"></div>
<div style="left:73.2px;top:535px;width:974.6px;height:21px;background:#4d6082;border:1px solid #7c8bab;border-bottom:none;box-sizing:border-box;"></div>
<div class="t" style="left:77.5px;top:536.7px;height:18px;line-height:18px;color:#fff;"><span class="c">错误列表</span></div>
<svg style="left:1002.5px;top:544px" width="7.6" height="4.3" viewBox="0 0 7.6 4.3"><path d="M0 0 L7.6 0 L3.8 3.8 Z" fill="#e4e8f1"/></svg>
<svg style="left:1017.2px;top:540.4px" width="7.2" height="10.4" viewBox="0 0 7.2 10.4"><path d="M1.4 0.6 L5.8 0.6 M2 0.6 L2 5.6 M5.2 0.6 L5.2 5.6 M4.3 0.6 L4.3 5.6 M0.2 5.6 L7 5.6 M3.6 5.6 L3.6 10" fill="none" stroke="#e4e8f1" stroke-width="1.1"/></svg>
<svg style="left:1031px;top:541px" width="9.6" height="9.6" viewBox="0 0 9.6 9.6"><path d="M0.6 0.6 L9 9 M9 0.6 L0.6 9" stroke="#e4e8f1" stroke-width="1.5"/></svg>
<div style="left:73.2px;top:556px;width:974.6px;height:28px;background:#cfd6e5;"></div>
<svg style="left:85px;top:565.5px" width="11.5" height="9.5" viewBox="0 0 11.5 9.5"><path d="M0 0 L11.4 0 L6.9 4.6 L6.9 9.2 L4.5 9.2 L4.5 4.6 Z" fill="#2b2b2b"/></svg>
<svg style="left:104.5px;top:568.5px" width="5.6" height="3.3" viewBox="0 0 5.6 3.3"><path d="M0 0 L5.6 0 L2.8 2.8 Z" fill="#1e1e1e"/></svg>
<div style="left:116px;top:560px;width:1.2px;height:19.5px;background:#8d97ad;"></div>
<svg style="left:125px;top:563px" width="14" height="14" viewBox="0 0 14 14"><circle cx="7" cy="7" r="6.8" fill="#c3c4ca"/><path d="M4.1 4.1 L9.9 9.9 M9.9 4.1 L4.1 9.9" stroke="#eef0f5" stroke-width="2"/></svg>
<div class="t mx" style="left:143.5px;top:561px;height:18px;line-height:18px;color:#8b8b8b;"><span class="l"><span class="d">0</span> </span><span class="c">个错误</span></div>
<div style="left:203px;top:560px;width:1.2px;height:19.5px;background:#8d97ad;"></div>
<svg style="left:212px;top:563px" width="14" height="14" viewBox="0 0 14 14"><path d="M7 0.6 L13.6 13 L0.4 13 Z" fill="#d9dbe2"/><rect x="6.2" y="4.6" width="1.6" height="4.6" fill="#9b9ca3"/><rect x="6.2" y="10" width="1.6" height="1.6" fill="#9b9ca3"/></svg>
<div class="t mx" style="left:230.5px;top:561px;height:18px;line-height:18px;color:#8b8b8b;"><span class="l"><span class="d">0</span> </span><span class="c">个警告</span></div>
<div style="left:290.5px;top:560px;width:1.2px;height:19.5px;background:#8d97ad;"></div>
<svg style="left:298.5px;top:563px" width="14" height="14" viewBox="0 0 14 14"><circle cx="7" cy="7" r="6.8" fill="#c3c4ca"/><rect x="6" y="5.8" width="2" height="5.4" fill="#eef0f5"/><rect x="6" y="2.8" width="2" height="2" fill="#eef0f5"/></svg>
<div class="t mx" style="left:317.5px;top:561px;height:18px;line-height:18px;color:#8b8b8b;"><span class="l"><span class="d">0</span> </span><span class="c">个消息</span></div>
<div style="left:377.5px;top:560px;width:1.2px;height:19.5px;background:#8d97ad;"></div>
<div class="t" style="left:388.5px;top:561px;height:18px;line-height:18px;color:#8b8b8b;"><span class="l">Clear</span></div>
<div style="left:848px;top:559.4px;width:199px;height:19.4px;background:#fff;border:1px solid #c3c9d9;box-sizing:border-box;"></div>
<div class="t" style="left:852.5px;top:560.5px;height:18px;line-height:18px;color:#6d6d6d;"><span class="c">搜索错误列表</span></div>
<svg style="left:1019.5px;top:563px" width="13" height="13" viewBox="0 0 13 13"><circle cx="8" cy="4.4" r="3.3" fill="none" stroke="#555" stroke-width="1.7"/><path d="M5.6 6.8 L0.9 11.6" stroke="#555" stroke-width="2.2"/></svg>
<svg style="left:1037.5px;top:567.5px" width="5" height="3" viewBox="0 0 5 3"><path d="M0 0 L5 0 L2.5 2.5 Z" fill="#555"/></svg>
<div style="left:73.2px;top:584px;width:974.6px;height:16px;background:#f5f5f5;border-bottom:1px solid #ccceda;box-sizing:border-box;"></div>
<div style="left:90px;top:584px;width:1px;height:15px;background:#d5d7e0;"></div>
<div style="left:108px;top:584px;width:1px;height:15px;background:#d5d7e0;"></div>
<div style="left:666px;top:584px;width:1px;height:15px;background:#d5d7e0;"></div>
<div style="left:786px;top:584px;width:1px;height:15px;background:#d5d7e0;"></div>
<div style="left:856px;top:584px;width:1px;height:15px;background:#d5d7e0;"></div>
<div style="left:926px;top:584px;width:1px;height:15px;background:#d5d7e0;"></div>
<div class="t" style="left:113.5px;top:583.6px;height:17px;line-height:17px;color:#111;"><span class="c">说明</span></div>
<svg style="left:147.5px;top:589.5px" width="9" height="5" viewBox="0 0 9 5"><path d="M0 0 L9 0 L4.5 4.5 Z" fill="#6a6a6a"/></svg>
<div class="t" style="left:671.5px;top:583.6px;height:17px;line-height:17px;color:#111;"><span class="c">文件</span></div>
<div class="t" style="left:792px;top:583.6px;height:17px;line-height:17px;color:#111;"><span class="c">行</span></div>
<div class="t" style="left:862px;top:583.6px;height:17px;line-height:17px;color:#111;"><span class="c">列</span></div>
<div class="t" style="left:932px;top:583.6px;height:17px;line-height:17px;color:#111;"><span class="c">项目</span></div>
<div style="left:1047.8px;top:117px;width:6.5px;height:609.4px;background:linear-gradient(180deg,#293955 0px,#33476a 90px,#33476a 100%);"></div>
<div style="left:1054.3px;top:117px;width:347.4px;height:609.5px;background:#fff;border:1px solid #8e9bbc;border-top:none;box-sizing:border-box;"></div>
<div style="left:1054.3px;top:117px;width:347.4px;height:21px;background:#4d6082;border:1px solid #7c8bab;border-bottom:none;box-sizing:border-box;"></div>
<div class="t" style="left:1058.6px;top:118.9px;height:18px;line-height:18px;color:#fff;"><span class="c">解决方案资源管理器</span></div>
<svg style="left:1356px;top:126px" width="7.6" height="4.3" viewBox="0 0 7.6 4.3"><path d="M0 0 L7.6 0 L3.8 3.8 Z" fill="#e4e8f1"/></svg>
<svg style="left:1371.2px;top:122.4px" width="7.2" height="10.4" viewBox="0 0 7.2 10.4"><path d="M1.4 0.6 L5.8 0.6 M2 0.6 L2 5.6 M5.2 0.6 L5.2 5.6 M4.3 0.6 L4.3 5.6 M0.2 5.6 L7 5.6 M3.6 5.6 L3.6 10" fill="none" stroke="#e4e8f1" stroke-width="1.1"/></svg>
<svg style="left:1385.5px;top:123px" width="9.6" height="9.6" viewBox="0 0 9.6 9.6"><path d="M0.6 0.6 L9 9 M9 0.6 L0.6 9" stroke="#e4e8f1" stroke-width="1.5"/></svg>
<div style="left:1054.3px;top:138px;width:347.4px;height:28.5px;background:#cfd6e5;"></div>
<svg style="left:1063.5px;top:145.5px" width="13" height="13" viewBox="0 0 13 13"><circle cx="6.5" cy="6.5" r="6.2" fill="#b9bdc9"/><path d="M10 5.6 L6 5.6 L6 3.2 L2.4 6.5 L6 9.8 L6 7.4 L10 7.4 Z" fill="#dfe2ea"/></svg>
<svg style="left:1085.5px;top:145.5px" width="13" height="13" viewBox="0 0 13 13"><circle cx="6.5" cy="6.5" r="6.2" fill="#b9bdc9"/><path d="M3 5.6 L7 5.6 L7 3.2 L10.6 6.5 L7 9.8 L7 7.4 L3 7.4 Z" fill="#dfe2ea"/></svg>
<svg style="left:1106.5px;top:144.5px" width="15" height="14.5" viewBox="0 0 15 14.5"><path d="M7.5 1 L14.2 7.6 L12.4 7.6 L12.4 13.6 L2.6 13.6 L2.6 7.6 L0.8 7.6 Z" fill="#f4f5f8" stroke="#262626" stroke-width="1.7" stroke-linejoin="round"/><rect x="5.8" y="8.6" width="3.4" height="5" fill="#262626"/><rect x="10.4" y="1.6" width="2" height="3.6" fill="#262626"/></svg>
<div style="left:1128px;top:142.5px;width:1.2px;height:19px;background:#8d97ad;"></div>
<svg style="left:1139px;top:144px" width="14" height="15" viewBox="0 0 14 15"><circle cx="8" cy="8.8" r="4.5" fill="#eef0f6" stroke="#262626" stroke-width="2.1"/><path d="M8 6.2 L8 9 L10.2 9" fill="none" stroke="#262626" stroke-width="1.3"/><path d="M0.2 1.2 L4.8 1.2 M2.5 1.2 L2.5 4.8" stroke="#262626" stroke-width="1.4"/></svg>
<svg style="left:1159.5px;top:151.5px" width="5" height="3" viewBox="0 0 5 3"><path d="M0 0 L5 0 L2.5 2.5 Z" fill="#1e1e1e"/></svg>
<svg style="left:1173px;top:146px" width="13" height="12" viewBox="0 0 13 12"><path d="M1.6 4.2 L11.6 4.2 M8.2 0.8 L11.8 4.2 L8.8 6 M11.4 8 L1.4 8 M4.8 11.4 L1.2 8 L4.2 6.2" fill="none" stroke="#262626" stroke-width="2" stroke-linejoin="round"/></svg>
<svg style="left:1195px;top:145px" width="14" height="13.5" viewBox="0 0 14 13.5"><path d="M3.6 2.8 L3.6 0.9 L13 0.9 L13 8.8 L11.2 8.8" fill="none" stroke="#262626" stroke-width="1.5"/><path d="M5.6 4.8 L5.6 2.8 L11 2.8" fill="none" stroke="#262626" stroke-width="1"/><rect x="0.9" y="4.4" width="9.4" height="8.2" fill="#f4f5f8" stroke="#262626" stroke-width="1.8"/><path d="M3.2 8.4 L8 8.4" stroke="#1b58a8" stroke-width="1.7"/></svg>
<svg style="left:1216px;top:144px" width="15" height="15" viewBox="0 0 15 15"><path d="M0.6 11 L0.6 0.6 L8 0.6" fill="none" stroke="#2b2b2b" stroke-width="1" stroke-dasharray="1.2 1.2"/><path d="M3.6 12.6 L3.6 3.4 L9 3.4 L11.4 5.6" fill="none" stroke="#2b2b2b" stroke-width="1.1"/><path d="M6 5.6 L11 5.6 L13.6 8 L13.6 14.4 L6 14.4 Z" fill="#f4f5f8" stroke="#2b2b2b" stroke-width="1.2"/><path d="M7.6 9 L12 9 M7.6 11 L12 11 M7.6 12.8 L12 12.8" stroke="#2b2b2b" stroke-width="0.8"/></svg>
<div style="left:1237.5px;top:142.5px;width:1.2px;height:19px;background:#8d97ad;"></div>
<svg style="left:1247.5px;top:145.5px" width="13" height="13" viewBox="0 0 13 13"><path d="M9.2 0.3 C6.6 0.1 4.8 2 5.4 4.6 L0.7 9.4 C-0.5 10.8 1.9 13.2 3.3 11.9 L8.1 7.2 C10.8 7.8 12.8 5.9 12.5 3.4 L10.3 5.5 L8 4.7 L7.3 2.4 Z" fill="#262626"/></svg>
<div style="left:1264.5px;top:140px;width:21.5px;height:23.5px;background:#fdf4bf;border:1px solid #e5c365;box-sizing:border-box;"></div>
<svg style="left:1268px;top:149px" width="15" height="6" viewBox="0 0 15 6"><path d="M0 3.6 L7 3.6 L7 1 L14.4 1 L14.4 5 L7 5 L7 4.6 L0 4.6 Z" fill="#1e1e1e"/></svg>
<div style="left:1055.3px;top:167px;width:344.9px;height:18.5px;background:#fff;"></div>
<div class="t mx" style="left:1060px;top:167px;height:18px;line-height:18px;color:#6d6d6d;"><span class="c">搜索解决方案资源管理器</span><span class="l">(Ctrl+;)</span></div>
<svg style="left:1373.5px;top:170px" width="13" height="13" viewBox="0 0 13 13"><circle cx="8" cy="4.4" r="3.3" fill="none" stroke="#555" stroke-width="1.7"/><path d="M5.6 6.8 L0.9 11.6" stroke="#555" stroke-width="2.2"/></svg>
<svg style="left:1392px;top:175px" width="4.6" height="2.8" viewBox="0 0 4.6 2.8"><path d="M0 0 L4.6 0 L2.3 2.3 Z" fill="#555"/></svg>
<div style="left:1054.3px;top:185.5px;width:347.4px;height:2.6px;background:#c9d0e2;"></div>
<div style="left:1385.2px;top:188px;width:16px;height:538.4px;background:#e8e8ec;"></div>
<svg style="left:1388.8px;top:194.5px" width="9.4" height="5" viewBox="0 0 9.4 5"><path d="M0 5 L4.7 0 L9.4 5 Z" fill="#868999"/></svg>
<svg style="left:1388.8px;top:715.9px" width="9.4" height="5" viewBox="0 0 9.4 5"><path d="M0 0 L9.4 0 L4.7 5 Z" fill="#868999"/></svg>
<div style="left:1388.9px;top:286px;width:8.6px;height:384.5px;background:#d0d1d7;"></div>
<div style="left:1054.3px;top:188px;width:331.2px;height:538.5px;overflow:hidden;">
</div>
<div style="left:1055.3px;top:442.1px;width:330.2px;height:18.7px;background:#cccedb;"></div>
<svg style="left:1121.5px;top:191.8px" width="16" height="16" viewBox="0 0 16 16"><path d="M0.9 3.8 L5.5 3.8 M7.6 5 L7.6 12.3 M7.6 8.1 L10.3 8.1 M5.5 12.3 L10.3 12.3" fill="none" stroke="#33507e" stroke-width="1.1"/><g fill="#eef2f9" stroke="#33507e" stroke-width="1.1"><rect x="5.5" y="2.4" width="4.8" height="2.6"/><rect x="10.3" y="6.8" width="5.1" height="2.6"/><rect x="10.3" y="11" width="5.1" height="2.6"/><rect x="0.9" y="11" width="4.6" height="2.6"/></g></svg>
<div class="t" style="left:1142px;top:191px;height:18px;line-height:18px;color:#111;"><span class="l">Routes</span></div>
<svg style="left:1120.8px;top:209.8px" width="16" height="16" viewBox="0 0 16 16"><rect x="0.6" y="0.6" width="14.8" height="14.8" fill="#dde6ea" stroke="#44587a" stroke-width="1.1"/><path d="M3 2.6 L13 2.6 L13 5.8 L11 6.8 L11 10 L13 11 L13 13.6 L3 13.6 L3 11 L5 10 L5 6.8 L3 5.8 Z" fill="#a8354a"/><path d="M4.8 3.8 L11.2 3.8 L11.2 5 L9.4 6 L9.4 10.8 L11.2 11.6 L11.2 12.4 L4.8 12.4 L4.8 11.6 L6.6 10.8 L6.6 6 L4.8 5 Z" fill="#c97884"/></svg>
<div class="t" style="left:1142px;top:209px;height:18px;line-height:18px;color:#111;"><span class="l">TcCOM Objects</span></div>
<svg style="left:1083.8px;top:231px" width="6.5" height="10" viewBox="0 0 6.5 10"><path d="M0.8 0.9 L5.6 5 L0.8 9.1 Z" fill="#fff" stroke="#2a2a2a" stroke-width="1.1"/></svg>
<svg style="left:1103px;top:227.8px" width="16" height="16" viewBox="0 0 16 16"><defs><linearGradient id="mo227" x1="0" y1="0" x2="0" y2="1"><stop offset="0" stop-color="#ececec"/><stop offset="1" stop-color="#bdbdbd"/></linearGradient></defs><rect x="0.5" y="0.5" width="15" height="15" fill="url(#mo227)" stroke="#8a8a8a"/><rect x="1" y="12.4" width="14" height="2.6" fill="#a9a9a9"/><path d="M2.2 12.2 L2.2 9.6 L4 9.2 L3.4 7 L5.6 6.2 L6.6 4.2 L9.4 4.2 L10.4 6.2 L12.6 7 L12 9.2 L13.8 9.6 L13.8 12.2 Z" fill="#e4e4e4" stroke="#5f5f5f" stroke-width="1"/><path d="M6.2 12 L6.2 10.2 L9.8 10.2 L9.8 12" fill="#bdbdbd" stroke="#5f5f5f" stroke-width="0.9"/></svg>
<div class="t" style="left:1123.6px;top:227px;height:18px;line-height:18px;color:#111;"><span class="l">MOTION</span></div>
<svg style="left:1083.4px;top:250.6px" width="7" height="7" viewBox="0 0 7 7"><path d="M6.6 0.4 L6.6 6.6 L0.4 6.6 Z" fill="#1e1e1e"/></svg>
<svg style="left:1103px;top:245.8px" width="16.5" height="16.5" viewBox="0 0 16.5 16.5"><rect x="0.8" y="0.8" width="14.9" height="14.9" fill="#f8c48e" stroke="#e2701c" stroke-width="1.6"/><rect x="2.8" y="2.6" width="4.6" height="6.6" fill="#fdebd6" stroke="#d8681c" stroke-width="1"/><rect x="9" y="3" width="4.6" height="10" fill="#fdebd6" stroke="#d8681c" stroke-width="1"/><rect x="2.3" y="10.6" width="5.6" height="2.9" fill="#e88a3c"/></svg>
<div class="t" style="left:1123.6px;top:245px;height:18px;line-height:18px;color:#111;"><span class="l">PLC</span></div>
<svg style="left:1101.2px;top:268.6px" width="7" height="7" viewBox="0 0 7 7"><path d="M6.6 0.4 L6.6 6.6 L0.4 6.6 Z" fill="#1e1e1e"/></svg>
<svg style="left:1120.8px;top:263.8px" width="16.5" height="16.5" viewBox="0 0 16.5 16.5"><rect x="0.8" y="0.8" width="14.9" height="14.9" fill="#f8c48e" stroke="#e2701c" stroke-width="1.6"/><rect x="2.8" y="2.6" width="4.6" height="6.6" fill="#fdebd6" stroke="#d8681c" stroke-width="1"/><rect x="9" y="3" width="4.6" height="10" fill="#fdebd6" stroke="#d8681c" stroke-width="1"/><rect x="2.3" y="10.6" width="5.6" height="2.9" fill="#e88a3c"/></svg>
<div class="t" style="left:1142px;top:263px;height:18px;line-height:18px;color:#111;"><span class="l">Test</span></div>
<svg style="left:1118.7px;top:286.6px" width="7" height="7" viewBox="0 0 7 7"><path d="M6.6 0.4 L6.6 6.6 L0.4 6.6 Z" fill="#1e1e1e"/></svg>
<svg style="left:1138.3px;top:281.8px" width="17" height="17" viewBox="0 0 17 17"><rect x="3.4" y="3.6" width="12.6" height="12" fill="#cfd8ea" stroke="#4b5f86" stroke-width="1"/><rect x="3.4" y="3.6" width="12.6" height="2.6" fill="#3b5fa8"/><path d="M8.6 9 L14 9 M8.6 11.4 L14 11.4 M8.6 13.6 L14 13.6" stroke="#2b2b2b" stroke-width="1.1"/><rect x="0.6" y="9.6" width="6.6" height="6.6" fill="#1e1e1e"/><rect x="2.4" y="9.6" width="3" height="2.4" fill="#e6e6e6"/><path d="M3.6 0.8 L3.6 3.4 M3.6 0.8 L5.6 0.8 L5.6 2 L3.6 2 M7 0.8 L7 3.2 L8.8 3.2 M12.2 0.8 L10.2 0.8 L10.2 3.2 L12.2 3.2" fill="none" stroke="#f08a1c" stroke-width="1.1"/></svg>
<div class="t" style="left:1160px;top:281px;height:18px;line-height:18px;color:#111;"><span class="l">Test Project</span></div>
<svg style="left:1137.8px;top:303px" width="6.5" height="10" viewBox="0 0 6.5 10"><path d="M0.8 0.9 L5.6 5 L0.8 9.1 Z" fill="#fff" stroke="#2a2a2a" stroke-width="1.1"/></svg>
<svg style="left:1157px;top:299.8px" width="16" height="16" viewBox="0 0 16 16"><defs><linearGradient id="fo299" x1="0" y1="0" x2="0" y2="1"><stop offset="0" stop-color="#fff3c4"/><stop offset="1" stop-color="#eaa93a"/></linearGradient></defs><path d="M0.6 4.6 L0.6 2.8 L5.4 2.8 L6.6 4.6 Z" fill="#ead08e" stroke="#b58a2a" stroke-width="0.8"/><rect x="0.6" y="4.6" width="14" height="9" fill="url(#fo299)" stroke="#a87c22" stroke-width="0.9"/></svg>
<div class="t" style="left:1178px;top:299px;height:18px;line-height:18px;color:#111;"><span class="l">External Types</span></div>
<svg style="left:1137.8px;top:321px" width="6.5" height="10" viewBox="0 0 6.5 10"><path d="M0.8 0.9 L5.6 5 L0.8 9.1 Z" fill="#fff" stroke="#2a2a2a" stroke-width="1.1"/></svg>
<svg style="left:1157px;top:317.8px" width="16" height="16" viewBox="0 0 16 16"><path d="M0.6 4.4 L0.6 2.4 L5.6 2.4 L6.8 4.4 Z" fill="#e1e1e1" stroke="#a0a0a0" stroke-width="0.8"/><rect x="0.6" y="4.4" width="14.6" height="9.8" fill="#ececec" stroke="#a0a0a0" stroke-width="0.9"/><rect x="6" y="7" width="7" height="4.6" fill="#d5e4f2" stroke="#4a6a8a" stroke-width="0.9"/><path d="M2.4 9.4 L6 9.4" stroke="#2a9a9a" stroke-width="1.4"/><circle cx="3" cy="9.4" r="1.2" fill="#2a9a9a"/></svg>
<div class="t" style="left:1178px;top:317px;height:18px;line-height:18px;color:#111;"><span class="l">References</span></div>
<svg style="left:1137.8px;top:339px" width="6.5" height="10" viewBox="0 0 6.5 10"><path d="M0.8 0.9 L5.6 5 L0.8 9.1 Z" fill="#fff" stroke="#2a2a2a" stroke-width="1.1"/></svg>
<svg style="left:1157px;top:335.8px" width="16" height="16" viewBox="0 0 16 16"><defs><linearGradient id="fo335" x1="0" y1="0" x2="0" y2="1"><stop offset="0" stop-color="#fff3c4"/><stop offset="1" stop-color="#eaa93a"/></linearGradient></defs><path d="M0.6 4.6 L0.6 2.8 L5.4 2.8 L6.6 4.6 Z" fill="#ead08e" stroke="#b58a2a" stroke-width="0.8"/><rect x="0.6" y="4.6" width="14" height="9" fill="url(#fo335)" stroke="#a87c22" stroke-width="0.9"/></svg>
<div class="t" style="left:1178px;top:335px;height:18px;line-height:18px;color:#111;"><span class="l">DUTs</span></div>
<svg style="left:1137.8px;top:357px" width="6.5" height="10" viewBox="0 0 6.5 10"><path d="M0.8 0.9 L5.6 5 L0.8 9.1 Z" fill="#fff" stroke="#2a2a2a" stroke-width="1.1"/></svg>
<svg style="left:1157px;top:353.8px" width="16" height="16" viewBox="0 0 16 16"><defs><linearGradient id="fo353" x1="0" y1="0" x2="0" y2="1"><stop offset="0" stop-color="#fff3c4"/><stop offset="1" stop-color="#eaa93a"/></linearGradient></defs><path d="M0.6 4.6 L0.6 2.8 L5.4 2.8 L6.6 4.6 Z" fill="#ead08e" stroke="#b58a2a" stroke-width="0.8"/><rect x="0.6" y="4.6" width="14" height="9" fill="url(#fo353)" stroke="#a87c22" stroke-width="0.9"/></svg>
<div class="t" style="left:1178px;top:353px;height:18px;line-height:18px;color:#111;"><span class="l">GVLs</span></div>
<svg style="left:1137.8px;top:375px" width="6.5" height="10" viewBox="0 0 6.5 10"><path d="M0.8 0.9 L5.6 5 L0.8 9.1 Z" fill="#fff" stroke="#2a2a2a" stroke-width="1.1"/></svg>
<svg style="left:1157px;top:371.8px" width="16" height="16" viewBox="0 0 16 16"><defs><linearGradient id="fo371" x1="0" y1="0" x2="0" y2="1"><stop offset="0" stop-color="#fff3c4"/><stop offset="1" stop-color="#eaa93a"/></linearGradient></defs><path d="M0.6 4.6 L0.6 2.8 L5.4 2.8 L6.6 4.6 Z" fill="#ead08e" stroke="#b58a2a" stroke-width="0.8"/><rect x="0.6" y="4.6" width="14" height="9" fill="url(#fo371)" stroke="#a87c22" stroke-width="0.9"/></svg>
<div class="t" style="left:1178px;top:371px;height:18px;line-height:18px;color:#111;"><span class="l">Motor</span></div>
<svg style="left:1137.4px;top:394.6px" width="7" height="7" viewBox="0 0 7 7"><path d="M6.6 0.4 L6.6 6.6 L0.4 6.6 Z" fill="#1e1e1e"/></svg>
<svg style="left:1157px;top:389.8px" width="17" height="16" viewBox="0 0 17 16"><path d="M0.6 13.6 L0.6 2.6 L5.6 2.6 L6.8 4.4 L13 4.4 L13 7" fill="#f6e2a2" stroke="#a8801f" stroke-width="0.9"/><path d="M0.8 13.8 L3.8 7 L16.4 7 L13 13.8 Z" fill="#f4cb62" stroke="#a8801f" stroke-width="0.9"/></svg>
<div class="t" style="left:1178px;top:389px;height:18px;line-height:18px;color:#111;"><span class="l">POUs</span></div>
<svg style="left:1175px;top:407.8px" width="15" height="17" viewBox="0 0 15 17"><path d="M1.8 0.8 L10.2 0.8 L13.6 4.2 L13.6 15.6 L1.8 15.6 Z" fill="#fdfdfd" stroke="#3a3a3a" stroke-width="1"/><path d="M10.2 0.8 L10.2 4.2 L13.6 4.2" fill="#d9d9d9" stroke="#3a3a3a" stroke-width="0.8"/><path d="M4.2 3.6 L9.2 3.6 M5.6 5.9 L11.6 5.9 M7.8 8.1 L11.6 8.1 M7.8 10.3 L11.6 10.3 M7.8 12.5 L11.6 12.5" stroke="#1616e6" stroke-width="1.35"/><rect x="0.2" y="9.2" width="6.6" height="6.8" fill="#1e1e1e"/><rect x="2" y="9.2" width="3" height="2.6" fill="#e6e6e6"/></svg>
<div class="t" style="left:1196px;top:407px;height:18px;line-height:18px;color:#111;"><span class="l">ADS_Communication (PRG)</span></div>
<svg style="left:1175px;top:425.8px" width="15" height="17" viewBox="0 0 15 17"><path d="M1.8 0.8 L10.2 0.8 L13.6 4.2 L13.6 15.6 L1.8 15.6 Z" fill="#fdfdfd" stroke="#3a3a3a" stroke-width="1"/><path d="M10.2 0.8 L10.2 4.2 L13.6 4.2" fill="#d9d9d9" stroke="#3a3a3a" stroke-width="0.8"/><path d="M4.2 3.6 L9.2 3.6 M5.6 5.9 L11.6 5.9 M7.8 8.1 L11.6 8.1 M7.8 10.3 L11.6 10.3 M7.8 12.5 L11.6 12.5" stroke="#1616e6" stroke-width="1.35"/><rect x="0.2" y="9.2" width="6.6" height="6.8" fill="#1e1e1e"/><rect x="2" y="9.2" width="3" height="2.6" fill="#e6e6e6"/></svg>
<div class="t" style="left:1196px;top:425px;height:18px;line-height:18px;color:#111;"><span class="l">ADS_HMI (PRG)</span></div>
<svg style="left:1175px;top:443.8px" width="15" height="17" viewBox="0 0 15 17"><path d="M1.8 0.8 L10.2 0.8 L13.6 4.2 L13.6 15.6 L1.8 15.6 Z" fill="#fdfdfd" stroke="#3a3a3a" stroke-width="1"/><path d="M10.2 0.8 L10.2 4.2 L13.6 4.2" fill="#d9d9d9" stroke="#3a3a3a" stroke-width="0.8"/><path d="M4.2 3.6 L9.2 3.6 M5.6 5.9 L11.6 5.9 M7.8 8.1 L11.6 8.1 M7.8 10.3 L11.6 10.3 M7.8 12.5 L11.6 12.5" stroke="#1616e6" stroke-width="1.35"/><rect x="0.2" y="9.2" width="6.6" height="6.8" fill="#1e1e1e"/><rect x="2" y="9.2" width="3" height="2.6" fill="#e6e6e6"/></svg>
<div class="t" style="left:1196px;top:443px;height:18px;line-height:18px;color:#111;"><span class="l">Alram (PRG)</span></div>
<svg style="left:1175px;top:461.8px" width="15" height="17" viewBox="0 0 15 17"><path d="M1.8 0.8 L10.2 0.8 L13.6 4.2 L13.6 15.6 L1.8 15.6 Z" fill="#fdfdfd" stroke="#3a3a3a" stroke-width="1"/><path d="M10.2 0.8 L10.2 4.2 L13.6 4.2" fill="#d9d9d9" stroke="#3a3a3a" stroke-width="0.8"/><path d="M4.2 3.6 L9.2 3.6 M5.6 5.9 L11.6 5.9 M7.8 8.1 L11.6 8.1 M7.8 10.3 L11.6 10.3 M7.8 12.5 L11.6 12.5" stroke="#1616e6" stroke-width="1.35"/><rect x="0.2" y="9.2" width="6.6" height="6.8" fill="#1e1e1e"/><rect x="2" y="9.2" width="3" height="2.6" fill="#e6e6e6"/></svg>
<div class="t" style="left:1196px;top:461px;height:18px;line-height:18px;color:#111;"><span class="l">Auto (PRG)</span></div>
<svg style="left:1175px;top:479.8px" width="15" height="17" viewBox="0 0 15 17"><path d="M1.8 0.8 L10.2 0.8 L13.6 4.2 L13.6 15.6 L1.8 15.6 Z" fill="#fdfdfd" stroke="#3a3a3a" stroke-width="1"/><path d="M10.2 0.8 L10.2 4.2 L13.6 4.2" fill="#d9d9d9" stroke="#3a3a3a" stroke-width="0.8"/><path d="M4.2 3.6 L9.2 3.6 M5.6 5.9 L11.6 5.9 M7.8 8.1 L11.6 8.1 M7.8 10.3 L11.6 10.3 M7.8 12.5 L11.6 12.5" stroke="#1616e6" stroke-width="1.35"/><rect x="0.2" y="9.2" width="6.6" height="6.8" fill="#1e1e1e"/><rect x="2" y="9.2" width="3" height="2.6" fill="#e6e6e6"/></svg>
<div class="t" style="left:1196px;top:479px;height:18px;line-height:18px;color:#111;"><span class="l">AxisStatus (PRG)</span></div>
<svg style="left:1175px;top:497.8px" width="15" height="17" viewBox="0 0 15 17"><path d="M1.8 0.8 L10.2 0.8 L13.6 4.2 L13.6 15.6 L1.8 15.6 Z" fill="#fdfdfd" stroke="#3a3a3a" stroke-width="1"/><path d="M10.2 0.8 L10.2 4.2 L13.6 4.2" fill="#d9d9d9" stroke="#3a3a3a" stroke-width="0.8"/><path d="M4.2 3.6 L9.2 3.6 M5.6 5.9 L11.6 5.9 M7.8 8.1 L11.6 8.1 M7.8 10.3 L11.6 10.3 M7.8 12.5 L11.6 12.5" stroke="#1616e6" stroke-width="1.35"/><rect x="0.2" y="9.2" width="6.6" height="6.8" fill="#1e1e1e"/><rect x="2" y="9.2" width="3" height="2.6" fill="#e6e6e6"/></svg>
<div class="t" style="left:1196px;top:497px;height:18px;line-height:18px;color:#111;"><span class="l">Blink (FB)</span></div>
<svg style="left:1175px;top:515.8px" width="15" height="17" viewBox="0 0 15 17"><path d="M1.8 0.8 L10.2 0.8 L13.6 4.2 L13.6 15.6 L1.8 15.6 Z" fill="#fdfdfd" stroke="#3a3a3a" stroke-width="1"/><path d="M10.2 0.8 L10.2 4.2 L13.6 4.2" fill="#d9d9d9" stroke="#3a3a3a" stroke-width="0.8"/><path d="M4.2 3.6 L9.2 3.6 M5.6 5.9 L11.6 5.9 M7.8 8.1 L11.6 8.1 M7.8 10.3 L11.6 10.3 M7.8 12.5 L11.6 12.5" stroke="#1616e6" stroke-width="1.35"/><rect x="0.2" y="9.2" width="6.6" height="6.8" fill="#1e1e1e"/><rect x="2" y="9.2" width="3" height="2.6" fill="#e6e6e6"/></svg>
<div class="t" style="left:1196px;top:515px;height:18px;line-height:18px;color:#111;"><span class="l">File_W_R (PRG)</span></div>
<svg style="left:1175px;top:533.8px" width="15" height="17" viewBox="0 0 15 17"><path d="M1.8 0.8 L10.2 0.8 L13.6 4.2 L13.6 15.6 L1.8 15.6 Z" fill="#fdfdfd" stroke="#3a3a3a" stroke-width="1"/><path d="M10.2 0.8 L10.2 4.2 L13.6 4.2" fill="#d9d9d9" stroke="#3a3a3a" stroke-width="0.8"/><path d="M4.2 3.6 L9.2 3.6 M5.6 5.9 L11.6 5.9 M7.8 8.1 L11.6 8.1 M7.8 10.3 L11.6 10.3 M7.8 12.5 L11.6 12.5" stroke="#1616e6" stroke-width="1.35"/><rect x="0.2" y="9.2" width="6.6" height="6.8" fill="#1e1e1e"/><rect x="2" y="9.2" width="3" height="2.6" fill="#e6e6e6"/></svg>
<div class="t" style="left:1196px;top:533px;height:18px;line-height:18px;color:#111;"><span class="l">Home (PRG)</span></div>
<svg style="left:1175px;top:551.8px" width="15" height="17" viewBox="0 0 15 17"><path d="M1.8 0.8 L10.2 0.8 L13.6 4.2 L13.6 15.6 L1.8 15.6 Z" fill="#fdfdfd" stroke="#3a3a3a" stroke-width="1"/><path d="M10.2 0.8 L10.2 4.2 L13.6 4.2" fill="#d9d9d9" stroke="#3a3a3a" stroke-width="0.8"/><path d="M4.2 3.6 L9.2 3.6 M5.6 5.9 L11.6 5.9 M7.8 8.1 L11.6 8.1 M7.8 10.3 L11.6 10.3 M7.8 12.5 L11.6 12.5" stroke="#1616e6" stroke-width="1.35"/><rect x="0.2" y="9.2" width="6.6" height="6.8" fill="#1e1e1e"/><rect x="2" y="9.2" width="3" height="2.6" fill="#e6e6e6"/></svg>
<div class="t" style="left:1196px;top:551px;height:18px;line-height:18px;color:#111;"><span class="l">MAIN (PRG)</span></div>
<svg style="left:1175px;top:569.8px" width="15" height="17" viewBox="0 0 15 17"><path d="M1.8 0.8 L10.2 0.8 L13.6 4.2 L13.6 15.6 L1.8 15.6 Z" fill="#fdfdfd" stroke="#3a3a3a" stroke-width="1"/><path d="M10.2 0.8 L10.2 4.2 L13.6 4.2" fill="#d9d9d9" stroke="#3a3a3a" stroke-width="0.8"/><path d="M4.2 3.6 L9.2 3.6 M5.6 5.9 L11.6 5.9 M7.8 8.1 L11.6 8.1 M7.8 10.3 L11.6 10.3 M7.8 12.5 L11.6 12.5" stroke="#1616e6" stroke-width="1.35"/><rect x="0.2" y="9.2" width="6.6" height="6.8" fill="#1e1e1e"/><rect x="2" y="9.2" width="3" height="2.6" fill="#e6e6e6"/></svg>
<div class="t" style="left:1196px;top:569px;height:18px;line-height:18px;color:#111;"><span class="l">ManualAxis (PRG)</span></div>
<svg style="left:1175px;top:587.8px" width="15" height="17" viewBox="0 0 15 17"><path d="M1.8 0.8 L10.2 0.8 L13.6 4.2 L13.6 15.6 L1.8 15.6 Z" fill="#fdfdfd" stroke="#3a3a3a" stroke-width="1"/><path d="M10.2 0.8 L10.2 4.2 L13.6 4.2" fill="#d9d9d9" stroke="#3a3a3a" stroke-width="0.8"/><path d="M4.2 3.6 L9.2 3.6 M5.6 5.9 L11.6 5.9 M7.8 8.1 L11.6 8.1 M7.8 10.3 L11.6 10.3 M7.8 12.5 L11.6 12.5" stroke="#1616e6" stroke-width="1.35"/><rect x="0.2" y="9.2" width="6.6" height="6.8" fill="#1e1e1e"/><rect x="2" y="9.2" width="3" height="2.6" fill="#e6e6e6"/></svg>
<div class="t" style="left:1196px;top:587px;height:18px;line-height:18px;color:#111;"><span class="l">ManualIO (PRG)</span></div>
<svg style="left:1175px;top:605.8px" width="15" height="17" viewBox="0 0 15 17"><path d="M1.8 0.8 L10.2 0.8 L13.6 4.2 L13.6 15.6 L1.8 15.6 Z" fill="#fdfdfd" stroke="#3a3a3a" stroke-width="1"/><path d="M10.2 0.8 L10.2 4.2 L13.6 4.2" fill="#d9d9d9" stroke="#3a3a3a" stroke-width="0.8"/><path d="M4.2 3.6 L9.2 3.6 M5.6 5.9 L11.6 5.9 M7.8 8.1 L11.6 8.1 M7.8 10.3 L11.6 10.3 M7.8 12.5 L11.6 12.5" stroke="#1616e6" stroke-width="1.35"/><rect x="0.2" y="9.2" width="6.6" height="6.8" fill="#1e1e1e"/><rect x="2" y="9.2" width="3" height="2.6" fill="#e6e6e6"/></svg>
<div class="t" style="left:1196px;top:605px;height:18px;line-height:18px;color:#111;"><span class="l">Param (PRG)</span></div>
<svg style="left:1175px;top:623.8px" width="15" height="17" viewBox="0 0 15 17"><path d="M1.8 0.8 L10.2 0.8 L13.6 4.2 L13.6 15.6 L1.8 15.6 Z" fill="#fdfdfd" stroke="#3a3a3a" stroke-width="1"/><path d="M10.2 0.8 L10.2 4.2 L13.6 4.2" fill="#d9d9d9" stroke="#3a3a3a" stroke-width="0.8"/><path d="M4.2 3.6 L9.2 3.6 M5.6 5.9 L11.6 5.9 M7.8 8.1 L11.6 8.1 M7.8 10.3 L11.6 10.3 M7.8 12.5 L11.6 12.5" stroke="#1616e6" stroke-width="1.35"/><rect x="0.2" y="9.2" width="6.6" height="6.8" fill="#1e1e1e"/><rect x="2" y="9.2" width="3" height="2.6" fill="#e6e6e6"/></svg>
<div class="t" style="left:1196px;top:623px;height:18px;line-height:18px;color:#111;"><span class="l">Safety (PRG)</span></div>
<svg style="left:1157px;top:641.8px" width="16" height="17" viewBox="0 0 16 17"><path d="M3.4 0.6 L11 0.6 L14.6 4 L14.6 16 L3.4 16 Z" fill="#fdfdfd" stroke="#3a3a3a" stroke-width="1"/><path d="M4.6 5 L9 5 M4.6 7.2 L8 7.2" stroke="#777" stroke-width="1"/><circle cx="10.6" cy="11.4" r="3.8" fill="#2c68c8"/><path d="M8.6 9.4 C10 10 10.4 12 9.4 14 M11 8 C12.6 9.6 12.6 12 12 14.4" stroke="#4fb04a" stroke-width="1.4" fill="none"/><rect x="0.4" y="9.6" width="6.8" height="6.8" fill="#1e1e1e"/><rect x="2.2" y="9.6" width="3.2" height="2.6" fill="#e6e6e6"/></svg>
<div class="t" style="left:1178px;top:641px;height:18px;line-height:18px;color:#111;"><span class="l">GlobalTextList</span></div>
<svg style="left:1137.8px;top:663px" width="6.5" height="10" viewBox="0 0 6.5 10"><path d="M0.8 0.9 L5.6 5 L0.8 9.1 Z" fill="#fff" stroke="#2a2a2a" stroke-width="1.1"/></svg>
<svg style="left:1157px;top:659.8px" width="16" height="17" viewBox="0 0 16 17"><path d="M4.6 4.4 L4.6 1 L8.6 1 M7 -0.6 L8.8 1 L7 2.6" fill="none" stroke="#1b6fd6" stroke-width="1.3"/><rect x="6.6" y="5" width="8.6" height="8" fill="#e4effc" stroke="#1b6fd6" stroke-width="1.2"/><path d="M8.4 7.6 L13.4 7.6 M8.4 10.4 L13.4 10.4" stroke="#1b6fd6" stroke-width="1.1"/><path d="M10.6 13 L10.6 16 L6.6 16" fill="none" stroke="#1b6fd6" stroke-width="1.2"/><rect x="0.4" y="9.6" width="6.8" height="6.8" fill="#1e1e1e"/><rect x="2.2" y="9.6" width="3.2" height="2.6" fill="#e6e6e6"/></svg>
<div class="t" style="left:1178px;top:659px;height:18px;line-height:18px;color:#111;"><span class="l">PlcTask (PlcTask)</span></div>
<svg style="left:1157px;top:677.8px" width="16" height="16" viewBox="0 0 16 16"><path d="M5.6 3 L8 3 L8 13 L10.6 13 M8 3.6 L10.6 3.6" fill="none" stroke="#555" stroke-width="1"/><rect x="0.6" y="0.8" width="5" height="5" fill="#7bbf3f" stroke="#4e8f22" stroke-width="0.8"/><rect x="10.4" y="0.8" width="5" height="5" fill="#7bbf3f" stroke="#4e8f22" stroke-width="0.8"/><rect x="10.4" y="10.4" width="5" height="5" fill="#7bbf3f" stroke="#4e8f22" stroke-width="0.8"/><path d="M3 7.6 L5.4 10 L3 12.4 L0.6 10 Z" fill="#e0e0e0" stroke="#666" stroke-width="0.8"/></svg>
<div class="t" style="left:1178px;top:677px;height:18px;line-height:18px;color:#111;"><span class="l">Test.tmc</span></div>
<svg style="left:1119.4px;top:699px" width="6.5" height="10" viewBox="0 0 6.5 10"><path d="M0.8 0.9 L5.6 5 L0.8 9.1 Z" fill="#fff" stroke="#2a2a2a" stroke-width="1.1"/></svg>
<svg style="left:1138.6px;top:695.8px" width="16" height="16" viewBox="0 0 16 16"><rect x="0.6" y="0.6" width="14.8" height="14.8" fill="#dde6ea" stroke="#44587a" stroke-width="1.1"/><path d="M3 2.6 L13 2.6 L13 5.8 L11 6.8 L11 10 L13 11 L13 13.6 L3 13.6 L3 11 L5 10 L5 6.8 L3 5.8 Z" fill="#c8384c"/><path d="M4.8 3.8 L11.2 3.8 L11.2 5 L9.4 6 L9.4 10.8 L11.2 11.6 L11.2 12.4 L4.8 12.4 L4.8 11.6 L6.6 10.8 L6.6 6 L4.8 5 Z" fill="#e58d97"/></svg>
<div class="t" style="left:1160px;top:695px;height:18px;line-height:18px;color:#111;"><span class="l">Test Instance</span></div>
<div style="left:0;top:0;width:1457px;height:726.5px;overflow:hidden;">
<svg style="left:1103px;top:713.8px" width="16.5" height="16.5" viewBox="0 0 16.5 16.5"><rect x="0.7" y="0.7" width="15" height="15" fill="#ffd21f" stroke="#eaa61a" stroke-width="1.4"/><path d="M6.6 3 L9.6 3 L9.8 4.6 L11.4 3.8 L13 6 L11.8 7.2 L13 8.6 L13 10.4 L11.4 10.6 L11.6 12.6 L9.6 13.4 L8.6 12 L7 13.4 L5 12.4 L5.4 10.6 L3.6 10 L3.6 7.6 L5.2 7.2 L4.4 5.4 L6 4.2 Z" fill="none" stroke="#e49a12" stroke-width="1.1"/><circle cx="8.3" cy="8.2" r="2" fill="none" stroke="#e49a12" stroke-width="1"/></svg>
<div class="t" style="left:1123.6px;top:713px;height:18px;line-height:18px;color:#111;"><span class="l">SAFETY</span></div>
</div>
<svg style="left:1318.5px;top:667.5px" width="13" height="20" viewBox="0 0 13 20"><path d="M0.8 0.8 L0.8 15.4 L4.2 12.4 L6.8 18.4 L9.2 17.4 L6.6 11.6 L11.2 11.4 Z" fill="#fff" stroke="#111" stroke-width="1.1" stroke-linejoin="round"/></svg>
</div></body></html>
